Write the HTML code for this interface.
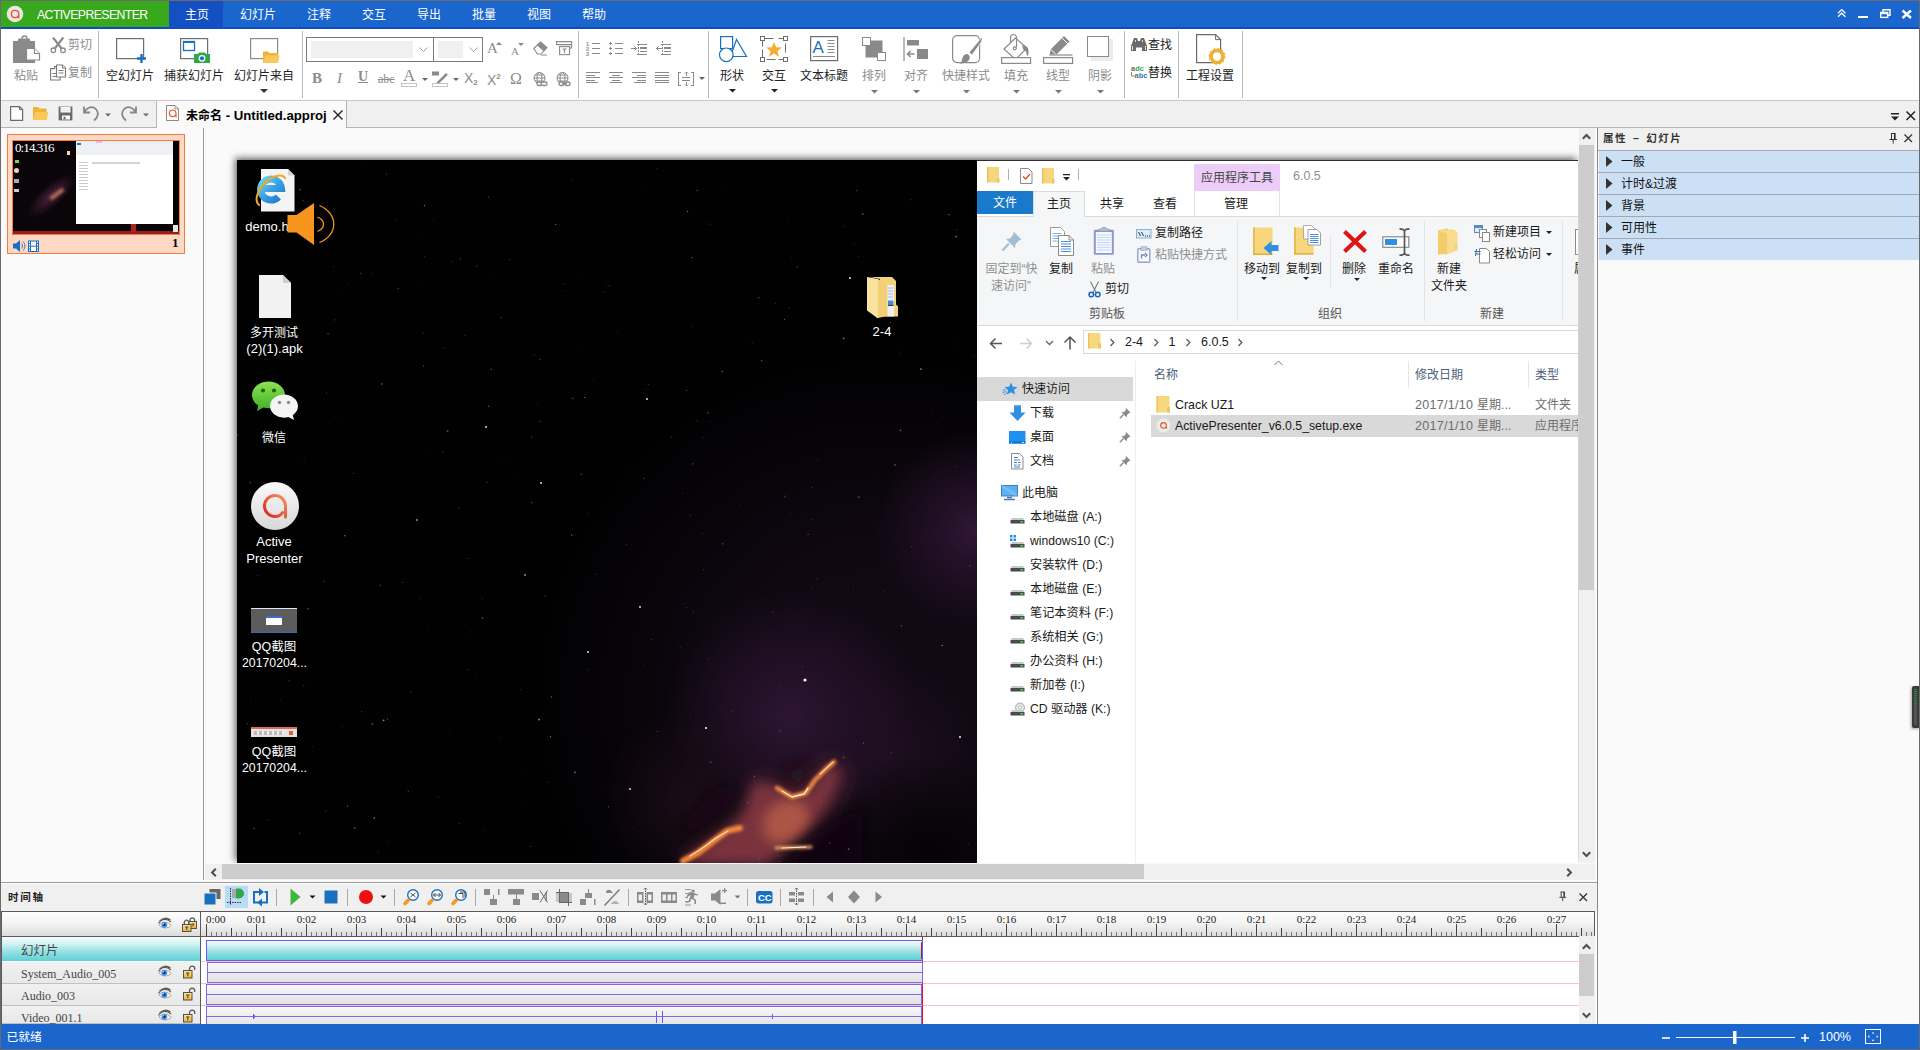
<!DOCTYPE html>
<html lang="zh-CN"><head><meta charset="utf-8"><title>ActivePresenter</title>
<style>
*{box-sizing:border-box;margin:0;padding:0}
html,body{width:1920px;height:1050px;overflow:hidden;background:#fafafa}
body{font-family:"Liberation Sans","Noto Sans CJK SC",sans-serif;font-size:12px;color:#222;position:relative}
.a{position:absolute}
.t{position:absolute;white-space:nowrap;line-height:16px}
svg{position:absolute;overflow:visible}
#win{position:absolute;left:0;top:0;width:1920px;height:1050px;border:1px solid #6a6a6a;pointer-events:none;z-index:99}
/* top bar */
#top{left:0;top:0;width:1920px;height:29px;background:#1a66cd}
#brand{left:1px;top:1px;width:168px;height:26px;background:#38a81c}
#tabhome{left:169px;top:1px;width:54px;height:27px;background:#1450c2}
.menu{color:#fff;font-size:12px;top:7px}
/* ribbon */
#ribbon{left:1px;top:29px;width:1918px;height:71px;background:#fff}
#ribline{left:1px;top:100px;width:1918px;height:1px;background:#c9c9c9}
.sep{position:absolute;top:31px;width:1px;height:67px;background:#b8b8b8}
.rl{position:absolute;white-space:nowrap;font-size:12px;line-height:16px;color:#222;transform:translateX(-50%)}
.rl.g{color:#8c8c8c}
.g{color:#8c8c8c}
/* doc bar */
#docbar{left:1px;top:101px;width:1918px;height:27px;background:#f0f0f0}
</style></head><body>
<div class="a" id="top"></div>
<div class="a" style="left:0;top:27px;width:1920px;height:2px;background:#0f4cc4"></div>
<div class="a" id="brand"></div>
<div class="a" id="tabhome"></div>
<svg style="left:6px;top:5px" width="18" height="18" viewBox="0 0 18 18"><circle cx="9" cy="9" r="8.300" fill="#e9e6e6"/><path d="M12.800 12.800V8.800a3.700 3.700 0 1 0-3.700 3.900c1.500 0 2.500-.7 3-1.600" fill="none" stroke="#e8552a" stroke-width="1.300" stroke-linecap="round"/></svg>
<div class="t" style="left:37px;top:7px;font-size:12.300px;color:#fff;letter-spacing:-0.600px">ACTIVEPRESENTER</div>
<div class="t menu" style="left:185px">主页</div>
<div class="t menu" style="left:240px">幻灯片</div>
<div class="t menu" style="left:307px">注释</div>
<div class="t menu" style="left:362px">交互</div>
<div class="t menu" style="left:417px">导出</div>
<div class="t menu" style="left:472px">批量</div>
<div class="t menu" style="left:527px">视图</div>
<div class="t menu" style="left:582px">帮助</div>
<svg style="left:1836px;top:8px" width="80" height="12" viewBox="1836 8 80 12" fill="none" stroke="#fff">
<path d="M1838 13.2l3.7-3.6 3.7 3.6M1838 16.8l3.7-3.6 3.7 3.6" stroke-width="1.3"/>
<path d="M1858 17h10" stroke-width="2"/>
<path d="M1883 12v-2.2h7v5.4h-2.2" stroke-width="1.4"/><rect x="1880.7" y="12.4" width="7" height="5" stroke-width="1.4"/><path d="M1880.7 13.4h7" stroke-width="1.6"/>
<path d="M1902.5 10.5l8.5 7.5M1911 10.5l-8.5 7.5" stroke-width="2.4"/>
</svg>
<div class="a" id="ribbon"></div>
<div class="a" id="ribline"></div>
<div class="sep" style="left:98px"></div><div class="sep" style="left:302px"></div><div class="sep" style="left:578px"></div><div class="sep" style="left:708px"></div><div class="sep" style="left:1124px"></div><div class="sep" style="left:1178px"></div><div class="sep" style="left:1242px"></div>
<!-- clipboard -->
<svg style="left:13px;top:35px" width="28" height="28" viewBox="0 0 28 28"><path d="M9 4.500V3.500a2.500 2.500 0 0 1 5 0v1" fill="none" stroke="#8a8a8a" stroke-width="1.300"/><path d="M0 6h22v22H0z" fill="#8a8a8a"/><path d="M5.500 3.500h11l1.500 3.500H4z" fill="#8a8a8a"/><path d="M13.500 13.500h8l5 5v6.500h-13z" fill="#fff" stroke="#8a8a8a" stroke-width="1.200"/><path d="M21.500 13.500v5h5" fill="#fff" stroke="#8a8a8a" stroke-width="1.200"/></svg>
<div class="rl g" style="left:26px;top:68px">粘贴</div>
<svg style="left:50px;top:36px" width="17" height="18" viewBox="0 0 17 18" fill="none" stroke="#8a8a8a" stroke-width="1.3"><circle cx="3.3" cy="14.3" r="2.3"/><circle cx="13" cy="14.3" r="2.3"/><path d="M4.800 12.500L13.300 1.500M11.500 12.500L3 1.500" stroke-width="2.100"/></svg>
<div class="t g" style="left:68px;top:37px">剪切</div>
<svg style="left:50px;top:64px" width="17" height="17" viewBox="0 0 17 17" fill="#fff" stroke="#7a7a7a" stroke-width="1.1"><path d="M0.600 4.600h4v-2h3.500v2h2V16H0.600z"/><path d="M6.500 1h6l3 3v9h-9z"/><path d="M12.500 1v3h3" /><path d="M8.500 6.500h5M8.500 9h5M2.500 9.500h4M2.500 12.500h4" stroke-width="1"/></svg>
<div class="t g" style="left:68px;top:65px">复制</div>
<!-- slides -->
<svg style="left:116px;top:38px" width="30" height="26" viewBox="0 0 30 26"><rect x="0.600" y="0.600" width="27" height="20" fill="#fff" stroke="#6e6e6e" stroke-width="1.200"/><path d="M25.500 16v9M21 20.500h9" stroke="#1a70c0" stroke-width="2.400"/></svg>
<div class="rl" style="left:130px;top:68px">空幻灯片</div>
<svg style="left:180px;top:38px" width="31" height="26" viewBox="0 0 31 26"><rect x="0.600" y="0.600" width="27" height="20" fill="#fff" stroke="#6e6e6e" stroke-width="1.200"/><rect x="3.500" y="3.500" width="11" height="9" fill="#fff" stroke="#1a70c0" stroke-width="1.300"/><path d="M3.500 4h11" stroke="#1a70c0" stroke-width="2"/><path d="M14 16h4l1-1.500h6l1 1.500h4v9H14z" fill="#2ea84a"/><circle cx="22" cy="20.300" r="3.400" fill="#fff"/><circle cx="22" cy="20.300" r="2.100" fill="#1a70c0"/></svg>
<div class="rl" style="left:194px;top:68px">捕获幻灯片</div>
<svg style="left:250px;top:38px" width="31" height="26" viewBox="0 0 31 26"><rect x="0.600" y="0.600" width="27" height="20" fill="#fff" stroke="#8a8a8a" stroke-width="1.200"/><path d="M13 13.500h5l1.500 1.500h8.500v10H13z" fill="#f2b33a"/><path d="M13 25l2.500-7.500h14L28 25z" fill="#f9c859"/></svg>
<div class="rl" style="left:264px;top:68px">幻灯片来自</div>
<svg style="left:260px;top:89px" width="8" height="4"><path d="M0 0h8l-4 4z" fill="#333"/></svg>
<!-- font -->
<div class="a" style="left:306px;top:37px;width:128px;height:25px;border:1px solid #7a7a7a;background:#fff"></div>
<div class="a" style="left:311px;top:41px;width:102px;height:17px;background:#f0f0f0"></div>
<div class="a" style="left:433px;top:37px;width:50px;height:25px;border:1px solid #7a7a7a;background:#fff"></div>
<div class="a" style="left:438px;top:41px;width:25px;height:17px;background:#f0f0f0"></div>
<svg style="left:419px;top:47px" width="60" height="6" fill="none" stroke="#a0a0a0" stroke-width="1"><path d="M0.500 0.500l4 4 4-4M50.500 0.500l4 4 4-4"/></svg>

<div class="t g" style="left:487px;top:40px;font:15px/16px 'Liberation Serif',serif">A</div><svg style="left:496px;top:42px" width="6" height="3"><path d="M0 3h6l-3-3z" fill="#8a8a8a"/></svg>
<div class="t g" style="left:511px;top:44px;font:11px/14px 'Liberation Serif',serif">A</div><svg style="left:518px;top:43px" width="6" height="3"><path d="M0 0h6l-3 3z" fill="#8a8a8a"/></svg>
<svg style="left:533px;top:41px" width="15" height="15" viewBox="0 0 15 15"><path d="M0.800 7.500L7.500 1l6.500 5.500-6 6.500H4.500z" fill="#fff" stroke="#8a8a8a" stroke-width="1.100"/><path d="M4 4.300L10.800 10.500 14 6.500 7.500 1z" fill="#8a8a8a"/><path d="M8 14h6" stroke="#8a8a8a" stroke-width="1"/></svg>
<svg style="left:556px;top:41px" width="17" height="15" viewBox="0 0 17 15" fill="none" stroke="#8a8a8a" stroke-width="1.100"><path d="M0.600 0.600h15v3h-15z"/><path d="M15.600 3v4h-2"/><rect x="3.600" y="5.600" width="10" height="8"/><path d="M6.500 8h4M8.500 8v4" stroke-width="1.200"/></svg>
<div class="t g" style="left:312px;top:70px;font:bold 15px/16px 'Liberation Serif',serif">B</div>
<div class="t g" style="left:337px;top:70px;font:italic 15px/16px 'Liberation Serif',serif">I</div>
<div class="t g" style="left:358px;top:69px;font:bold 14px/16px 'Liberation Serif',serif;text-decoration:underline">U</div>
<div class="t g" style="left:378px;top:71px;font:12px/16px 'Liberation Serif',serif;text-decoration:line-through">abc</div>
<div class="t g" style="left:403px;top:67px;font:17px/18px 'Liberation Serif',serif">A</div>
<div class="a" style="left:401px;top:83px;width:16px;height:4px;border:1px solid #c4c4c4;background:#fff"></div>
<svg style="left:422px;top:78px" width="6" height="3"><path d="M0 0h6l-3 3z" fill="#666"/></svg>
<svg style="left:432px;top:71px" width="17" height="13" viewBox="0 0 17 13"><rect x="0" y="0.500" width="7" height="4" fill="#8a8a8a"/><path d="M5 11l9-9 1.800 1.800-9 9H4z" fill="#8a8a8a"/></svg>
<div class="a" style="left:432px;top:83px;width:16px;height:4px;border:1px solid #c4c4c4;background:#fff"></div>
<svg style="left:453px;top:78px" width="6" height="3"><path d="M0 0h6l-3 3z" fill="#666"/></svg>
<div class="t g" style="left:464px;top:70px;font-size:14px">X<span style="font-size:8px;font-weight:bold;position:relative;top:2px">2</span></div>
<div class="t g" style="left:487px;top:72px;font-size:14px">X<span style="font-size:8px;font-weight:bold;position:relative;top:-6px">2</span></div>
<div class="t g" style="left:510px;top:71px;font:16px/16px 'Liberation Serif',serif">Ω</div>
<svg style="left:533px;top:72px" width="16" height="15" viewBox="0 0 16 15" fill="none" stroke="#8a8a8a" stroke-width="1"><circle cx="6.500" cy="6" r="5.500"/><ellipse cx="6.500" cy="6" rx="2.500" ry="5.500"/><path d="M1 6h11M2 3h9M2 9h9"/><rect x="4" y="10" width="5" height="3.500" rx="1.700" stroke-width="1.400" fill="#fff"/><rect x="8" y="10" width="6" height="3.500" rx="1.700" stroke-width="1.400" fill="#fff"/></svg>
<svg style="left:556px;top:72px" width="16" height="15" viewBox="0 0 16 15" fill="none" stroke="#8a8a8a" stroke-width="1"><circle cx="6.500" cy="6" r="5.500"/><ellipse cx="6.500" cy="6" rx="2.500" ry="5.500"/><path d="M1 6h11M2 3h9M2 9h9"/><rect x="3" y="10" width="5" height="3.500" rx="1.700" stroke-width="1.400" fill="#fff"/><rect x="9" y="10" width="5" height="3.500" rx="1.700" stroke-width="1.400" fill="#fff"/><path d="M6 11.800h5" stroke-width="1.400"/></svg>

<!-- paragraph -->
<svg style="left:586px;top:40px" width="90" height="17" viewBox="586 40 90 17" fill="none" stroke="#8a8a8a" stroke-width="1" shape-rendering="crispEdges">
<path d="M592 43.500h8M592 48.500h8M592 53.500h8"/>
<path d="M615 43.500h8M615 48.500h8M615 53.500h8"/><path d="M609 43.500h3M610.500 42v3M609 48.500h3M610.500 47v3M609 53.500h3M610.500 52v3"/>
<path d="M637 44.500h10M640 47.500h7M640 48.500h7M640 51.500h7M637 54.500h10"/><path d="M638.500 41v2M638.500 44v2M638.500 47v2M638.500 50v2M638.500 53v2"/><path d="M631 48.500h6"/>
<path d="M661 44.500h10M664 47.500h7M664 48.500h7M664 51.500h7M661 54.500h10"/><path d="M662.500 41v2M662.500 44v2M662.500 47v2M662.500 50v2M662.500 53v2"/><path d="M656 48.500h6"/>
</svg>
<svg style="left:586px;top:40px" width="90" height="17" viewBox="586 40 90 17" fill="none" stroke="#8a8a8a" stroke-width="1"><path d="M634.500 46.500l2 2-2 2M658.500 46.500l-2 2 2 2"/><text x="586" y="45.500" font-family="Liberation Sans,sans-serif" font-size="5.500" font-weight="bold" fill="#8a8a8a" stroke="none">1</text><text x="586" y="50.500" font-family="Liberation Sans,sans-serif" font-size="5.500" font-weight="bold" fill="#8a8a8a" stroke="none">2</text><text x="586" y="55.500" font-family="Liberation Sans,sans-serif" font-size="5.500" font-weight="bold" fill="#8a8a8a" stroke="none">3</text></svg>
<svg style="left:586px;top:71px" width="120" height="16" viewBox="586 71 120 16" fill="none" stroke="#8a8a8a" stroke-width="1" shape-rendering="crispEdges">
<path d="M586 72.500h14M586 75.500h9M586 77.500h14M586 80.500h9M586 82.500h12"/>
<path d="M609 72.500h14M612 75.500h8M609 77.500h14M612 80.500h8M610 82.500h12"/>
<path d="M632 72.500h14M637 75.500h9M632 77.500h14M637 80.500h9M634 82.500h12"/>
<path d="M655 72.500h14M655 75.500h14M655 77.500h14M655 80.500h14M655 82.500h14"/>
<path d="M681 72.500h-2.500v13h2.500M691 72.500h2.500v13h-2.500M682 77.500h8M682 80.500h8M686.500 72v4M686.500 82v4"/>
</svg>
<svg style="left:586px;top:71px" width="120" height="16" viewBox="586 71 120 16" fill="none" stroke="#8a8a8a" stroke-width="1"><path d="M685 73.500l1.500-1.500 1.500 1.500M685 84.500l1.500 1.500 1.500-1.500"/></svg>
<svg style="left:699px;top:77px" width="6" height="3"><path d="M0 0h6l-3 3z" fill="#666"/></svg>
<!-- big buttons -->
<svg style="left:719px;top:36px" width="29" height="27" viewBox="0 0 29 27" fill="#fff" stroke="#1a70c0" stroke-width="1.200"><rect x="1.600" y="0.600" width="12" height="12"/><path d="M17.500 3.500l10 17h-16z"/><circle cx="7.300" cy="18.800" r="6.800"/></svg>
<div class="rl" style="left:732px;top:68px">形状</div>
<svg style="left:729px;top:89px" width="7" height="4"><path d="M0 0h7l-3.500 3.500z" fill="#222"/></svg>
<svg style="left:760px;top:36px" width="29" height="27" viewBox="0 0 29 27"><rect x="2.500" y="2.500" width="23" height="21" fill="none" stroke="#6e6e6e" stroke-width="1" stroke-dasharray="9 5 9 3 9 5 9 3" stroke-dashoffset="-2"/><g fill="#fff" stroke="#6e6e6e" stroke-width="1"><rect x="0.500" y="0.500" width="4" height="4"/><rect x="23.500" y="0.500" width="4" height="4"/><rect x="0.500" y="21.500" width="4" height="4"/><rect x="23.500" y="21.500" width="4" height="4"/></g><path d="M14 6l2.200 5.200 5.600.4-4.300 3.600 1.400 5.500L14 17.600l-4.900 3.100 1.400-5.500-4.300-3.600 5.600-.4z" fill="#f4ae34"/></svg>
<div class="rl" style="left:774px;top:68px">交互</div>
<svg style="left:771px;top:89px" width="7" height="4"><path d="M0 0h7l-3.500 3.500z" fill="#222"/></svg>
<svg style="left:810px;top:36px" width="29" height="26" viewBox="0 0 29 26"><rect x="0.600" y="0.600" width="27" height="24" fill="#fff" stroke="#6e6e6e" stroke-width="1.200"/><text x="2.500" y="17" font-family="Liberation Sans,sans-serif" font-size="17" fill="#1a70c0">A</text><path d="M17.500 4.500h7M17.500 7.500h7M17.500 10.500h7M17.500 13.500h7M17.500 16.500h7M3 20.500h22" stroke="#8a8a8a" stroke-width="1"/></svg>
<div class="rl" style="left:824px;top:68px">文本标题</div>
<!-- disabled group -->
<svg style="left:862px;top:37px" width="25" height="25" viewBox="0 0 25 25"><rect x="3.500" y="3.500" width="17" height="17" fill="#8a8a8a"/><rect x="0.500" y="0.500" width="8" height="8" fill="#fff" stroke="#8a8a8a"/><rect x="15.500" y="15.500" width="8" height="8" fill="#fff" stroke="#8a8a8a"/></svg>
<div class="rl g" style="left:874px;top:68px">排列</div>
<svg style="left:871px;top:90px" width="7" height="4"><path d="M0 0h7l-3.500 3.500z" fill="#777"/></svg>
<svg style="left:903px;top:37px" width="26" height="25" viewBox="0 0 26 25"><path d="M1 0v24" stroke="#8a8a8a" stroke-width="1.200"/><rect x="4" y="3" width="12" height="5.500" fill="#8a8a8a"/><rect x="14" y="12" width="11" height="10" fill="#8a8a8a"/><path d="M4.500 17h7M7.500 14l-3 3 3 3" fill="none" stroke="#8a8a8a" stroke-width="1.600"/></svg>
<div class="rl g" style="left:916px;top:68px">对齐</div>
<svg style="left:913px;top:90px" width="7" height="4"><path d="M0 0h7l-3.500 3.500z" fill="#777"/></svg>
<svg style="left:952px;top:34px" width="31" height="30" viewBox="0 0 31 30"><rect x="0.600" y="1.600" width="27" height="27" rx="4.500" fill="#fff" stroke="#8a8a8a" stroke-width="1.200"/><path d="M17 18.500L29.500 3.500l1 0.500-1 4L20 21z" fill="#8a8a8a" stroke="#fff" stroke-width="0.800"/><path d="M15.500 20c-3 0-5 2-5.500 5.500-.3 2-1 3-2 4 4 0 8-1 9.500-4.500.8-2-.3-4.500-2-5z" fill="#8a8a8a"/></svg>
<div class="rl g" style="left:966px;top:68px">快捷样式</div>
<svg style="left:963px;top:90px" width="7" height="4"><path d="M0 0h7l-3.500 3.500z" fill="#777"/></svg>
<svg style="left:1001px;top:33px" width="31" height="31" viewBox="0 0 31 31" fill="none" stroke="#8a8a8a" stroke-width="1.200"><path d="M3 16L14.500 5 26 15 14.500 26.500z" fill="#fff"/><path d="M9.500 10V4.500a3 3 0 0 1 6 0V14"/><circle cx="13.800" cy="15.300" r="1.500"/><path d="M22 12.500c4 1 6 3 4.500 10-.5-4-2-6-4-6.500z" fill="#8a8a8a"/><rect x="0.600" y="24.600" width="29" height="5.800" fill="#fff"/></svg>
<div class="rl g" style="left:1016px;top:68px">填充</div>
<svg style="left:1013px;top:90px" width="7" height="4"><path d="M0 0h7l-3.500 3.500z" fill="#777"/></svg>
<svg style="left:1043px;top:33px" width="31" height="31" viewBox="0 0 31 31"><path d="M6.500 21.500L8 16 21 3l5.500 5.500-13 13z" fill="#8a8a8a"/><path d="M19 5l5.500 5.500" stroke="#fff" stroke-width="1"/><path d="M8 16.500l5 5" stroke="#fff" stroke-width="1"/><path d="M6.500 22h23" stroke="#8a8a8a" stroke-width="1.200"/><rect x="0.600" y="24.600" width="29" height="5.800" fill="#fff" stroke="#8a8a8a" stroke-width="1.200"/></svg>
<div class="rl g" style="left:1058px;top:68px">线型</div>
<svg style="left:1055px;top:90px" width="7" height="4"><path d="M0 0h7l-3.500 3.500z" fill="#777"/></svg>
<div class="a" style="left:1091px;top:39px;width:22px;height:22px;background:#ececec"></div>
<div class="a" style="left:1087px;top:36px;width:22px;height:21px;background:#fff;border:1px solid #8a8a8a"></div>
<div class="rl g" style="left:1100px;top:68px">阴影</div>
<svg style="left:1097px;top:90px" width="7" height="4"><path d="M0 0h7l-3.500 3.500z" fill="#777"/></svg>
<!-- find -->
<svg style="left:1131px;top:38px" width="16" height="13" viewBox="0 0 16 13" fill="#6a6a6a"><path d="M3 0h3l1 3h2l1-3h3l3 8v5h-5V9.500H5V13H0V8z"/><path d="M1.500 8v4M14.500 8v4M4.500 2v2M11.500 2v2" stroke="#fff" stroke-width="0.800"/></svg>
<div class="t" style="left:1148px;top:37px">查找</div>
<div class="t" style="left:1131px;top:65px;font:bold 7.400px/8px 'Liberation Sans',sans-serif;color:#6a6a6a">a<span style="color:#2ea84a">dc</span></div>
<div class="t" style="left:1134.500px;top:72px;font:bold 7.400px/8px 'Liberation Sans',sans-serif;color:#6a6a6a">a<span style="color:#1a70c0">bc</span></div>
<svg style="left:1131px;top:72px" width="4" height="6" fill="none" stroke="#6a6a6a" stroke-width="0.800"><path d="M0.500 0v4h3"/></svg>
<div class="t" style="left:1148px;top:65px">替换</div>
<svg style="left:1196px;top:34px" width="30" height="32" viewBox="0 0 30 32"><path d="M0.600 0.600h19l5 5v23h-24z" fill="#fff" stroke="#6a6a6a" stroke-width="1.200"/><path d="M19.600 0.600v5h5" fill="none" stroke="#6a6a6a" stroke-width="1"/><circle cx="21" cy="22.500" r="6" fill="#fff" stroke="#eeb030" stroke-width="3.600"/><circle cx="21" cy="22.500" r="7.600" fill="none" stroke="#eeb030" stroke-width="1.600" stroke-dasharray="2 1.980"/></svg>
<div class="rl" style="left:1210px;top:68px">工程设置</div>
<div class="a" id="docbar"></div>
<div class="a" style="left:1px;top:127px;width:1918px;height:1px;background:#b4b4b4"></div>
<div class="a" style="left:156px;top:101px;width:1px;height:27px;background:#b4b4b4"></div>
<div class="a" style="left:157px;top:101px;width:189px;height:27px;background:#fafafa"></div>
<div class="a" style="left:346px;top:101px;width:1px;height:27px;background:#b4b4b4"></div>
<svg style="left:9px;top:105px" width="142" height="17" viewBox="9 105 142 17" fill="none" stroke="#6a6a6a" stroke-width="1.200">
<path d="M10.600 106.600h9l3 3v10.800h-12z" fill="#fff"/><path d="M19.600 106.600v3h3" stroke-width="1"/>
<path d="M33 107h5l1.500 1.500h7v11.500H33z" fill="#f2b33a" stroke="none"/><path d="M33 120l2-8h13.500l-2 8z" fill="#f9c859" stroke="none"/>
<path d="M58.600 106.600h13.800v13.800H58.600z" fill="#6a6a6a" stroke="none"/><rect x="60.500" y="107" width="10" height="5.500" fill="#fff" stroke="none"/><rect x="62" y="115.500" width="8" height="4" fill="#fff" stroke="none"/><rect x="63.500" y="116.800" width="2" height="2.500" fill="#6a6a6a" stroke="none"/><path d="M61 108.800h9M61 110.800h9" stroke="#ccc" stroke-width="0.600"/>
<path d="M84 106.500v6h6M84.500 112c2-4 6.500-6 10-4s4.500 6.500 2 10l-2.500 2.500" stroke="#868686" stroke-width="1.800"/>
<path d="M105 113.500h6l-3 3z" fill="#6a6a6a" stroke="none"/>
<path d="M136 106.500v6h-6M135.500 112c-2-4-6.500-6-10-4s-4.500 6.500-2 10l2.500 2.500" stroke="#868686" stroke-width="1.800"/>
<path d="M143 113.500h6l-3 3z" fill="#6a6a6a" stroke="none"/>
</svg>
<svg style="left:166px;top:105px" width="13" height="16" viewBox="0 0 13 16"><path d="M0.500 0.500h8.500l3.500 3.500v11.500h-12z" fill="#fff" stroke="#8a8a8a" stroke-width="1"/><path d="M9 0.500v3.500h3.500" fill="none" stroke="#8a8a8a" stroke-width="0.800"/><path d="M10 12V8.200a3.300 3.300 0 1 0-3.300 3.400c1.200 0 2-.5 2.500-1.200" fill="none" stroke="#e8552a" stroke-width="1.200" stroke-linecap="round"/></svg>
<div class="t" style="left:186px;top:108px;font-weight:bold;color:#000;font-size:12px" id="doctitle">未命名<span style="font-size:13.200px"> - Untitled.approj</span></div>
<svg style="left:333px;top:110px" width="10" height="10" fill="none" stroke="#222" stroke-width="1.400"><path d="M0.500 0.500l9 9M9.500 0.500l-9 9"/></svg>
<svg style="left:1890px;top:113px" width="26" height="8" viewBox="0 0 26 8"><path d="M1 0h8v1.500H1zM1 3.500h8l-4 4z" fill="#222"/></svg>
<svg style="left:1906px;top:111px" width="9" height="9" fill="none" stroke="#222" stroke-width="1.500"><path d="M0.500 0.500l8.500 8.500M9 0.500l-8.500 8.500"/></svg>
<div class="a" style="left:1px;top:128px;width:202px;height:754px;background:#fafafa"></div>
<div class="a" style="left:203px;top:128px;width:1px;height:752px;background:#9a9a9a"></div>
<div class="a" style="left:7px;top:134px;width:178px;height:120px;background:#fdd9c5;border:1px solid #f47c3c"></div>
<div class="a" id="thumb" style="left:12px;top:140px;width:168px;height:95px;border:1px solid #ef7f45;background:#0a0508;overflow:hidden">
 <div class="a" style="left:8px;top:44px;width:60px;height:22px;background:radial-gradient(ellipse 30px 11px at 30px 11px,#4a2238 0%,#2a1224 50%,rgba(10,5,8,0) 100%);transform:rotate(-42deg)"></div>
 <div class="a" style="left:36px;top:51px;width:16px;height:4px;background:#b87058;transform:rotate(-38deg);filter:blur(1.500px)"></div>
 <div class="a" style="left:63px;top:0;width:97px;height:83px;background:#fff"></div>
 <div class="a" style="left:63px;top:0;width:97px;height:14px;background:#eef0f3"></div>
 <div class="a" style="left:64px;top:2px;width:4px;height:2px;background:#1979ca"></div>
 <div class="a" style="left:83px;top:0px;width:6px;height:2px;background:#e4b8f0"></div>
 <div class="a" style="left:79px;top:21px;width:48px;height:2px;background:#d4d4d4"></div>
 <div class="a" style="left:66px;top:19px;width:9px;height:30px;background:repeating-linear-gradient(#fff 0 2px,#c8ccd4 2px 3px)"></div>
 <div class="a" style="left:160px;top:0;width:6px;height:92px;background:#000"></div>
 <div class="a" style="left:0;top:90px;width:166px;height:3px;background:#9a1c1c"></div>
 <div class="a" style="left:118px;top:83px;width:5px;height:8px;background:#b02020;filter:blur(.6px)"></div>
 <div class="a" style="left:160px;top:84px;width:5px;height:7px;background:#dfe6ee;filter:blur(.6px)"></div>
 <div class="a" style="left:54px;top:10px;width:3px;height:4px;background:#f5d9a0;filter:blur(.5px)"></div>
 <div class="a" style="left:2px;top:19px;width:4px;height:3px;background:#7fd060;filter:blur(.5px)"></div>
 <div class="a" style="left:1px;top:27px;width:5px;height:5px;border-radius:3px;background:#f0d0c8;filter:blur(.5px)"></div>
 <div class="a" style="left:1px;top:38px;width:5px;height:4px;background:#aaa;filter:blur(.5px)"></div>
 <div class="a" style="left:1px;top:48px;width:5px;height:3px;background:#ccc;filter:blur(.5px)"></div>
 <div class="t" style="left:2px;top:-1px;font:13px/16px 'Liberation Serif',serif;color:#fff;letter-spacing:-0.900px">0:14.316</div>
</div>
<svg style="left:13px;top:240px" width="26" height="12" viewBox="0 0 26 12"><path d="M0 3.500h3l4-3.500v12l-4-3.500H0z" fill="#1a70c0"/><path d="M8.500 3.500c1.300 1.500 1.300 3.500 0 5M10 1.500c2.500 2.500 2.500 6.500 0 9" fill="none" stroke="#1a70c0" stroke-width="0.900"/><rect x="15.500" y="1" width="10" height="10.500" fill="#fff" stroke="#1a70c0" stroke-width="1"/><path d="M17.500 1v10.500M23.500 1v10.500M17.500 6.200h6M15.500 3.500h2M15.500 6.200h2M15.500 9h2M23.500 3.500h2M23.500 6.200h2M23.500 9h2" stroke="#1a70c0" stroke-width="1"/></svg>
<div class="t" style="left:172px;top:235px;font:bold 13px/16px 'Liberation Serif',serif;color:#000">1</div>
<!-- canvas area -->
<div class="a" style="left:204px;top:128px;width:1375px;height:735px;background:#fafafa"></div>
<div class="a" style="left:237px;top:160px;width:1341px;height:703px;box-shadow:-2px -2px 7px rgba(0,0,0,.6);background:#fff"></div>
<div class="a" id="slide" style="left:237px;top:160px;width:1341px;height:703px;overflow:hidden"><div class="a" id="sl" style="left:-237px;top:-160px;width:1920px;height:1050px">
<svg style="left:237px;top:160px" width="740" height="703" viewBox="237 160 740 703"><defs>
<filter id="b30" x="-50%" y="-50%" width="200%" height="200%"><feGaussianBlur stdDeviation="30"/></filter>
<filter id="b12" x="-50%" y="-50%" width="200%" height="200%"><feGaussianBlur stdDeviation="12"/></filter>
<filter id="b5" x="-50%" y="-50%" width="200%" height="200%"><feGaussianBlur stdDeviation="6"/></filter>
<filter id="b9" x="-50%" y="-50%" width="200%" height="200%"><feGaussianBlur stdDeviation="9"/></filter>
<filter id="b2" x="-50%" y="-50%" width="200%" height="200%"><feGaussianBlur stdDeviation="1.6"/></filter>
<filter id="b1" x="-50%" y="-50%" width="200%" height="200%"><feGaussianBlur stdDeviation="0.7"/></filter>
<clipPath id="wc"><rect x="237" y="160" width="740" height="703"/></clipPath>
</defs>
<rect x="237" y="160" width="740" height="703" fill="#010102"/>
<g clip-path="url(#wc)">
<radialGradient id="hz1" cx="880" cy="700" r="340" gradientUnits="userSpaceOnUse"><stop offset="0" stop-color="#150a17"/><stop offset="0.5" stop-color="#0e0710"/><stop offset="1" stop-color="#010102"/></radialGradient>
<radialGradient id="hz2" cx="790" cy="715" r="125" gradientUnits="userSpaceOnUse"><stop offset="0" stop-color="#2e1634" stop-opacity=".95"/><stop offset="0.5" stop-color="#2a1430" stop-opacity=".55"/><stop offset="1" stop-color="#2a1430" stop-opacity="0"/></radialGradient>
<radialGradient id="hz3" cx="975" cy="530" r="100" gradientUnits="userSpaceOnUse"><stop offset="0" stop-color="#321838" stop-opacity=".95"/><stop offset="0.55" stop-color="#2a1430" stop-opacity=".5"/><stop offset="1" stop-color="#2a1430" stop-opacity="0"/></radialGradient>
<radialGradient id="hz4" cx="930" cy="850" r="100" gradientUnits="userSpaceOnUse"><stop offset="0" stop-color="#040204" stop-opacity=".9"/><stop offset="1" stop-color="#040204" stop-opacity="0"/></radialGradient>
<radialGradient id="hz5" cx="690" cy="800" r="90" gradientUnits="userSpaceOnUse"><stop offset="0" stop-color="#1c0d18" stop-opacity=".9"/><stop offset="1" stop-color="#1c0d18" stop-opacity="0"/></radialGradient>
<radialGradient id="hz6" cx="900" cy="760" r="90" gradientUnits="userSpaceOnUse"><stop offset="0" stop-color="#1e0e20" stop-opacity=".8"/><stop offset="1" stop-color="#1e0e20" stop-opacity="0"/></radialGradient>
<rect x="237" y="160" width="740" height="703" fill="url(#hz1)"/>
<rect x="237" y="160" width="740" height="703" fill="url(#hz3)"/>
<rect x="237" y="160" width="740" height="703" fill="url(#hz6)"/>
<rect x="237" y="160" width="740" height="703" fill="url(#hz2)"/>
<rect x="237" y="160" width="740" height="703" fill="url(#hz5)"/>
<rect x="237" y="160" width="740" height="703" fill="url(#hz4)"/>
<g filter="url(#b12)">
<path d="M676 866 L727 828 L745 812 L757 776 L792 792 L836 758 L846 776 L828 810 L810 834 L786 848 L770 866z" fill="#5a2634"/>
</g>
<g filter="url(#b5)">
<path d="M681 863 L727 831 L743 817 L755 781 L777 788 L791 797 L806 793 L833 763 L840 776 L826 806 L808 830 L785 845 L767 863z" fill="#7e343e" opacity=".9"/>
<ellipse cx="786" cy="822" rx="24" ry="20" fill="#b45c48" opacity=".85" transform="rotate(-40 786 822)"/>
</g>
<g filter="url(#b9)">
<path d="M806 840 L862 806 L862 870 L785 870 L796 852z" fill="#120710" opacity=".8"/>
<path d="M780 776 L800 788 L812 773 L800 763z" fill="#1a0a16" opacity=".7"/>
<path d="M690 836 L728 808 L742 788 L718 788 L680 826z" fill="#140812" opacity=".6"/>
</g>
<g filter="url(#b2)" fill="none" stroke-linecap="round" stroke-linejoin="round">
<path d="M683 861 L698 853 L711 843 L727 831 L740 828" stroke="#f0873c" stroke-width="6"/>
<path d="M777 788 L785 793 L792 797 L806 793 L815 780 L826 769 L834 762" stroke="#ee8a40" stroke-width="4.500"/>
<path d="M776 848 L792 847.500 L811 847" stroke="#f0a060" stroke-width="3"/>
</g>
<g filter="url(#b1)" fill="none" stroke-linecap="round" stroke-linejoin="round">
<path d="M690 856 L704 847 L716 838 L728 831" stroke="#ffd9a0" stroke-width="1.400"/>
<path d="M782 791 L792 797 L804 794 L808 788" stroke="#ffe4b8" stroke-width="1.400"/>
<path d="M820 774 L833 762" stroke="#ffc888" stroke-width="1.400"/>
<path d="M782 848 L806 847" stroke="#fff0d8" stroke-width="1.200"/>
</g>
</g>
<g><circle cx="476.6" cy="266.0" r="0.9" fill="#fff" opacity="0.15"/><circle cx="844.7" cy="226.2" r="0.7" fill="#d8e0ff" opacity="0.15"/><circle cx="395.9" cy="220.4" r="0.6" fill="#fff" opacity="0.15"/><circle cx="304.1" cy="458.4" r="0.7" fill="#fff" opacity="0.15"/><circle cx="703.7" cy="569.8" r="0.45" fill="#d8e0ff" opacity="0.55"/><circle cx="530.5" cy="846.3" r="0.45" fill="#fff" opacity="0.55"/><circle cx="451.3" cy="261.4" r="0.45" fill="#e8d8f0" opacity="0.55"/><circle cx="651.6" cy="639.4" r="0.45" fill="#d8e0ff" opacity="0.55"/><circle cx="709.8" cy="421.8" r="0.7" fill="#d8e0ff" opacity="0.15"/><circle cx="281.1" cy="304.8" r="0.9" fill="#f0d0d8" opacity="0.55"/><circle cx="812.1" cy="487.3" r="0.6" fill="#e8d8f0" opacity="0.3"/><circle cx="420.8" cy="286.4" r="0.5" fill="#d8e0ff" opacity="0.15"/><circle cx="459.2" cy="508.1" r="0.55" fill="#e8d8f0" opacity="0.4"/><circle cx="687.6" cy="211.5" r="0.7" fill="#fff" opacity="0.4"/><circle cx="797.3" cy="266.8" r="0.6" fill="#fff" opacity="0.4"/><circle cx="948.9" cy="214.6" r="0.7" fill="#e8d8f0" opacity="0.55"/><circle cx="488.7" cy="406.2" r="0.6" fill="#f0d0d8" opacity="0.55"/><circle cx="287.9" cy="225.8" r="0.55" fill="#fff" opacity="0.4"/><circle cx="281.9" cy="653.1" r="0.9" fill="#f0d0d8" opacity="0.55"/><circle cx="447.6" cy="431.2" r="0.9" fill="#fff" opacity="0.3"/><circle cx="933.1" cy="409.9" r="0.7" fill="#f0d0d8" opacity="0.15"/><circle cx="280.6" cy="700.1" r="0.5" fill="#f0d0d8" opacity="0.2"/><circle cx="526.3" cy="772.6" r="0.45" fill="#f0d0d8" opacity="0.2"/><circle cx="534.2" cy="355.3" r="0.5" fill="#d8e0ff" opacity="0.4"/><circle cx="443.0" cy="452.0" r="0.55" fill="#fff" opacity="0.4"/><circle cx="348.7" cy="283.9" r="0.5" fill="#fff" opacity="0.2"/><circle cx="595.9" cy="574.2" r="0.55" fill="#fff" opacity="0.3"/><circle cx="344.8" cy="535.8" r="0.7" fill="#e8d8f0" opacity="0.55"/><circle cx="942.3" cy="645.4" r="0.7" fill="#fff" opacity="0.55"/><circle cx="574.9" cy="772.3" r="0.9" fill="#f0d0d8" opacity="0.55"/><circle cx="531.6" cy="437.1" r="0.6" fill="#fff" opacity="0.4"/><circle cx="378.1" cy="852.2" r="0.6" fill="#fff" opacity="0.2"/><circle cx="488.6" cy="197.0" r="0.45" fill="#fff" opacity="0.55"/><circle cx="634.1" cy="827.1" r="0.7" fill="#fff" opacity="0.15"/><circle cx="884.0" cy="591.7" r="0.5" fill="#e8d8f0" opacity="0.3"/><circle cx="682.7" cy="493.3" r="0.45" fill="#f0d0d8" opacity="0.4"/><circle cx="592.5" cy="379.2" r="0.5" fill="#e8d8f0" opacity="0.15"/><circle cx="784.9" cy="496.5" r="0.9" fill="#d8e0ff" opacity="0.2"/><circle cx="254.1" cy="828.5" r="0.7" fill="#fff" opacity="0.3"/><circle cx="747.7" cy="802.6" r="0.7" fill="#fff" opacity="0.3"/><circle cx="752.2" cy="343.6" r="0.55" fill="#e8d8f0" opacity="0.2"/><circle cx="808.2" cy="534.4" r="0.7" fill="#fff" opacity="0.3"/><circle cx="690.8" cy="714.2" r="0.5" fill="#f0d0d8" opacity="0.2"/><circle cx="784.5" cy="319.4" r="0.7" fill="#e8d8f0" opacity="0.4"/><circle cx="777.9" cy="855.7" r="0.55" fill="#e8d8f0" opacity="0.4"/><circle cx="380.3" cy="585.4" r="0.55" fill="#e8d8f0" opacity="0.4"/><circle cx="943.7" cy="416.3" r="0.5" fill="#fff" opacity="0.15"/><circle cx="584.9" cy="397.4" r="0.6" fill="#d8e0ff" opacity="0.55"/><circle cx="858.9" cy="497.1" r="0.9" fill="#fff" opacity="0.3"/><circle cx="854.6" cy="244.3" r="0.6" fill="#f0d0d8" opacity="0.2"/><circle cx="894.9" cy="465.0" r="0.9" fill="#fff" opacity="0.3"/><circle cx="829.6" cy="843.1" r="0.6" fill="#f0d0d8" opacity="0.4"/><circle cx="787.1" cy="219.7" r="0.5" fill="#fff" opacity="0.2"/><circle cx="257.4" cy="575.3" r="0.6" fill="#d8e0ff" opacity="0.2"/><circle cx="848.6" cy="849.2" r="0.9" fill="#fff" opacity="0.3"/><circle cx="643.0" cy="252.1" r="0.45" fill="#d8e0ff" opacity="0.15"/><circle cx="791.6" cy="257.9" r="0.5" fill="#fff" opacity="0.2"/><circle cx="423.4" cy="366.0" r="0.5" fill="#e8d8f0" opacity="0.55"/><circle cx="428.9" cy="454.6" r="0.5" fill="#e8d8f0" opacity="0.15"/><circle cx="901.3" cy="625.7" r="0.7" fill="#d8e0ff" opacity="0.4"/><circle cx="333.8" cy="266.7" r="0.7" fill="#f0d0d8" opacity="0.15"/><circle cx="811.6" cy="587.8" r="0.5" fill="#fff" opacity="0.2"/><circle cx="587.4" cy="669.8" r="0.7" fill="#e8d8f0" opacity="0.15"/><circle cx="741.9" cy="533.1" r="0.6" fill="#d8e0ff" opacity="0.15"/><circle cx="279.0" cy="294.5" r="0.45" fill="#d8e0ff" opacity="0.15"/><circle cx="571.6" cy="179.6" r="0.45" fill="#e8d8f0" opacity="0.4"/><circle cx="690.3" cy="515.4" r="0.7" fill="#e8d8f0" opacity="0.2"/><circle cx="571.7" cy="534.9" r="0.6" fill="#fff" opacity="0.55"/><circle cx="754.4" cy="776.2" r="0.55" fill="#fff" opacity="0.55"/><circle cx="858.6" cy="256.4" r="0.45" fill="#f0d0d8" opacity="0.4"/><circle cx="470.8" cy="631.8" r="0.6" fill="#fff" opacity="0.15"/><circle cx="732.4" cy="711.1" r="0.5" fill="#fff" opacity="0.3"/><circle cx="424.3" cy="256.5" r="0.6" fill="#fff" opacity="0.2"/><circle cx="531.7" cy="502.5" r="0.9" fill="#fff" opacity="0.2"/><circle cx="759.7" cy="858.8" r="0.6" fill="#f0d0d8" opacity="0.3"/><circle cx="381.9" cy="383.9" r="0.9" fill="#fff" opacity="0.3"/><circle cx="487.1" cy="482.4" r="0.9" fill="#f0d0d8" opacity="0.15"/><circle cx="482.3" cy="598.6" r="0.7" fill="#fff" opacity="0.15"/><circle cx="966.0" cy="714.2" r="0.45" fill="#e8d8f0" opacity="0.15"/><circle cx="438.2" cy="796.8" r="0.5" fill="#fff" opacity="0.3"/><circle cx="843.6" cy="757.3" r="0.9" fill="#f0d0d8" opacity="0.3"/><circle cx="347.5" cy="806.2" r="0.7" fill="#e8d8f0" opacity="0.4"/><circle cx="303.2" cy="200.4" r="0.9" fill="#f0d0d8" opacity="0.2"/><circle cx="899.5" cy="349.1" r="0.45" fill="#e8d8f0" opacity="0.15"/><circle cx="299.0" cy="761.9" r="0.45" fill="#fff" opacity="0.3"/><circle cx="572.8" cy="398.4" r="0.7" fill="#e8d8f0" opacity="0.4"/><circle cx="697.1" cy="190.4" r="0.9" fill="#fff" opacity="0.2"/><circle cx="954.2" cy="344.1" r="0.5" fill="#e8d8f0" opacity="0.2"/><circle cx="702.2" cy="533.4" r="0.5" fill="#f0d0d8" opacity="0.3"/><circle cx="607.1" cy="285.1" r="0.55" fill="#e8d8f0" opacity="0.15"/><circle cx="264.3" cy="173.0" r="0.7" fill="#fff" opacity="0.55"/><circle cx="617.5" cy="332.7" r="0.6" fill="#f0d0d8" opacity="0.15"/><circle cx="722.8" cy="543.8" r="0.6" fill="#e8d8f0" opacity="0.55"/><circle cx="745.9" cy="850.7" r="0.55" fill="#fff" opacity="0.2"/><circle cx="536.5" cy="404.3" r="0.45" fill="#fff" opacity="0.2"/><circle cx="289.3" cy="680.8" r="0.55" fill="#fff" opacity="0.4"/><circle cx="278.0" cy="627.7" r="0.6" fill="#e8d8f0" opacity="0.55"/><circle cx="680.1" cy="647.0" r="0.45" fill="#fff" opacity="0.4"/><circle cx="353.6" cy="473.4" r="0.55" fill="#e8d8f0" opacity="0.3"/><circle cx="956.7" cy="544.6" r="0.5" fill="#e8d8f0" opacity="0.15"/><circle cx="398.2" cy="288.6" r="0.55" fill="#fff" opacity="0.4"/><circle cx="588.2" cy="513.4" r="0.5" fill="#d8e0ff" opacity="0.2"/><circle cx="811.4" cy="223.9" r="0.45" fill="#f0d0d8" opacity="0.2"/><circle cx="671.2" cy="437.0" r="0.55" fill="#fff" opacity="0.3"/><circle cx="299.5" cy="833.2" r="0.5" fill="#f0d0d8" opacity="0.55"/><circle cx="802.6" cy="666.6" r="0.6" fill="#e8d8f0" opacity="0.2"/><circle cx="772.9" cy="612.2" r="0.45" fill="#f0d0d8" opacity="0.55"/><circle cx="780.1" cy="731.0" r="0.5" fill="#d8e0ff" opacity="0.55"/><circle cx="657.7" cy="731.5" r="0.45" fill="#fff" opacity="0.55"/><circle cx="300.0" cy="189.4" r="0.9" fill="#fff" opacity="0.3"/><circle cx="515.7" cy="477.3" r="0.45" fill="#d8e0ff" opacity="0.15"/><circle cx="740.7" cy="504.0" r="0.45" fill="#fff" opacity="0.4"/><circle cx="790.7" cy="513.6" r="0.7" fill="#d8e0ff" opacity="0.15"/><circle cx="285.9" cy="678.0" r="0.55" fill="#e8d8f0" opacity="0.15"/><circle cx="410.7" cy="691.8" r="0.5" fill="#f0d0d8" opacity="0.4"/><circle cx="862.7" cy="213.9" r="0.9" fill="#fff" opacity="0.3"/><circle cx="693.6" cy="611.9" r="0.45" fill="#fff" opacity="0.55"/><circle cx="482.5" cy="618.0" r="0.9" fill="#d8e0ff" opacity="0.3"/><circle cx="657.1" cy="168.8" r="0.45" fill="#e8d8f0" opacity="0.4"/><circle cx="956.7" cy="230.0" r="0.5" fill="#e8d8f0" opacity="0.4"/><circle cx="761.6" cy="360.7" r="0.6" fill="#fff" opacity="0.4"/><circle cx="972.0" cy="546.0" r="0.55" fill="#f0d0d8" opacity="0.15"/><circle cx="250.0" cy="482.7" r="0.7" fill="#e8d8f0" opacity="0.4"/><circle cx="523.3" cy="804.3" r="0.5" fill="#d8e0ff" opacity="0.15"/><circle cx="303.8" cy="685.5" r="0.55" fill="#fff" opacity="0.3"/><circle cx="683.5" cy="604.1" r="0.55" fill="#e8d8f0" opacity="0.15"/><circle cx="408.2" cy="791.1" r="0.6" fill="#fff" opacity="0.4"/><circle cx="354.7" cy="827.8" r="0.9" fill="#f0d0d8" opacity="0.4"/><circle cx="460.4" cy="258.9" r="0.55" fill="#e8d8f0" opacity="0.4"/><circle cx="326.5" cy="392.9" r="0.55" fill="#f0d0d8" opacity="0.3"/><circle cx="325.8" cy="811.3" r="0.9" fill="#e8d8f0" opacity="0.15"/><circle cx="424.4" cy="205.7" r="0.6" fill="#fff" opacity="0.55"/><circle cx="503.9" cy="460.9" r="0.55" fill="#e8d8f0" opacity="0.15"/><circle cx="312.3" cy="746.8" r="0.55" fill="#fff" opacity="0.2"/><circle cx="955.6" cy="466.7" r="0.55" fill="#e8d8f0" opacity="0.2"/><circle cx="818.0" cy="460.7" r="0.45" fill="#d8e0ff" opacity="0.4"/><circle cx="643.4" cy="665.9" r="0.45" fill="#f0d0d8" opacity="0.4"/><circle cx="692.0" cy="257.4" r="0.55" fill="#fff" opacity="0.4"/><circle cx="911.8" cy="546.7" r="0.5" fill="#f0d0d8" opacity="0.4"/><circle cx="491.3" cy="369.3" r="0.9" fill="#f0d0d8" opacity="0.3"/><circle cx="722.4" cy="371.5" r="0.7" fill="#fff" opacity="0.4"/><circle cx="360.8" cy="273.6" r="0.5" fill="#f0d0d8" opacity="0.55"/><circle cx="644.3" cy="478.4" r="0.55" fill="#f0d0d8" opacity="0.4"/><circle cx="340.3" cy="295.3" r="0.45" fill="#e8d8f0" opacity="0.2"/><circle cx="648.3" cy="384.5" r="0.55" fill="#d8e0ff" opacity="0.3"/><circle cx="386.6" cy="174.1" r="0.6" fill="#f0d0d8" opacity="0.4"/><circle cx="788.9" cy="307.6" r="0.55" fill="#fff" opacity="0.3"/><circle cx="605.6" cy="563.7" r="0.55" fill="#d8e0ff" opacity="0.2"/><circle cx="628.6" cy="715.6" r="0.5" fill="#e8d8f0" opacity="0.15"/><circle cx="900.6" cy="430.3" r="0.9" fill="#f0d0d8" opacity="0.4"/><circle cx="942.9" cy="756.6" r="0.45" fill="#fff" opacity="0.2"/><circle cx="551.6" cy="696.9" r="0.6" fill="#f0d0d8" opacity="0.55"/><circle cx="237.1" cy="435.2" r="0.7" fill="#f0d0d8" opacity="0.4"/><circle cx="420.9" cy="236.7" r="0.5" fill="#d8e0ff" opacity="0.2"/><circle cx="956.2" cy="236.5" r="0.9" fill="#fff" opacity="0.4"/><circle cx="645.1" cy="187.8" r="0.5" fill="#d8e0ff" opacity="0.2"/><circle cx="917.7" cy="613.8" r="0.55" fill="#e8d8f0" opacity="0.2"/><circle cx="627.9" cy="467.5" r="0.45" fill="#fff" opacity="0.15"/><circle cx="459.3" cy="823.3" r="0.5" fill="#e8d8f0" opacity="0.4"/><circle cx="402.5" cy="582.5" r="0.45" fill="#e8d8f0" opacity="0.55"/><circle cx="974.3" cy="355.9" r="0.55" fill="#f0d0d8" opacity="0.2"/><circle cx="626.4" cy="544.5" r="0.45" fill="#e8d8f0" opacity="0.4"/><circle cx="277.9" cy="296.5" r="0.9" fill="#fff" opacity="0.4"/><circle cx="427.4" cy="629.2" r="0.55" fill="#f0d0d8" opacity="0.2"/><circle cx="262.2" cy="397.7" r="0.6" fill="#f0d0d8" opacity="0.3"/><circle cx="383.6" cy="720.3" r="0.9" fill="#fff" opacity="0.55"/><circle cx="388.9" cy="841.8" r="0.55" fill="#fff" opacity="0.2"/><circle cx="581.2" cy="346.3" r="0.55" fill="#d8e0ff" opacity="0.15"/><circle cx="603.9" cy="291.7" r="0.5" fill="#f0d0d8" opacity="0.4"/><circle cx="910.7" cy="199.7" r="0.7" fill="#f0d0d8" opacity="0.2"/><circle cx="277.2" cy="176.6" r="0.7" fill="#f0d0d8" opacity="0.2"/><circle cx="275.4" cy="202.3" r="0.6" fill="#e8d8f0" opacity="0.4"/><circle cx="779.2" cy="861.3" r="0.5" fill="#fff" opacity="0.3"/><circle cx="374.3" cy="817.9" r="0.9" fill="#fff" opacity="0.4"/><circle cx="467.8" cy="669.9" r="0.55" fill="#f0d0d8" opacity="0.3"/><circle cx="362.3" cy="162.0" r="0.55" fill="#e8d8f0" opacity="0.15"/><circle cx="547.9" cy="782.3" r="0.7" fill="#f0d0d8" opacity="0.2"/><circle cx="500.9" cy="737.6" r="0.6" fill="#fff" opacity="0.15"/><circle cx="758.9" cy="297.6" r="0.7" fill="#fff" opacity="0.4"/><circle cx="476.2" cy="678.3" r="0.6" fill="#f0d0d8" opacity="0.15"/><circle cx="420.5" cy="599.7" r="0.6" fill="#f0d0d8" opacity="0.15"/><circle cx="262.8" cy="204.0" r="0.45" fill="#fff" opacity="0.3"/><circle cx="790.0" cy="791.7" r="0.55" fill="#e8d8f0" opacity="0.3"/><circle cx="484.9" cy="830.5" r="0.45" fill="#e8d8f0" opacity="0.3"/><circle cx="920.9" cy="369.1" r="0.9" fill="#fff" opacity="0.55"/><circle cx="254.9" cy="324.4" r="0.6" fill="#f0d0d8" opacity="0.4"/><circle cx="821.5" cy="802.2" r="0.6" fill="#f0d0d8" opacity="0.2"/><circle cx="372.4" cy="724.2" r="0.9" fill="#fff" opacity="0.3"/><circle cx="686.4" cy="390.4" r="0.55" fill="#e8d8f0" opacity="0.4"/><circle cx="817.0" cy="578.8" r="0.7" fill="#f0d0d8" opacity="0.2"/><circle cx="794.1" cy="333.9" r="0.45" fill="#f0d0d8" opacity="0.15"/><circle cx="645.9" cy="389.0" r="0.6" fill="#fff" opacity="0.15"/><circle cx="433.0" cy="219.1" r="0.45" fill="#f0d0d8" opacity="0.4"/><circle cx="968.4" cy="843.4" r="0.5" fill="#fff" opacity="0.2"/><circle cx="545.5" cy="596.1" r="0.9" fill="#d8e0ff" opacity="0.2"/><circle cx="863.8" cy="627.1" r="0.45" fill="#e8d8f0" opacity="0.3"/><circle cx="443.8" cy="348.2" r="0.55" fill="#fff" opacity="0.3"/><circle cx="562.2" cy="290.6" r="0.5" fill="#e8d8f0" opacity="0.2"/><circle cx="891.3" cy="566.5" r="0.55" fill="#f0d0d8" opacity="0.15"/><circle cx="423.2" cy="332.9" r="0.7" fill="#fff" opacity="0.2"/><circle cx="720.5" cy="856.6" r="0.45" fill="#f0d0d8" opacity="0.15"/><circle cx="890.3" cy="322.5" r="0.6" fill="#fff" opacity="0.3"/><circle cx="885.9" cy="323.7" r="0.45" fill="#d8e0ff" opacity="0.2"/><circle cx="957.0" cy="570.0" r="0.45" fill="#d8e0ff" opacity="0.3"/><circle cx="877.9" cy="475.7" r="0.55" fill="#fff" opacity="0.15"/><circle cx="708.7" cy="658.9" r="0.55" fill="#fff" opacity="0.2"/><circle cx="509.8" cy="259.4" r="0.5" fill="#fff" opacity="0.3"/><circle cx="680.6" cy="618.1" r="0.5" fill="#e8d8f0" opacity="0.15"/><circle cx="539.7" cy="421.4" r="0.7" fill="#fff" opacity="0.3"/><circle cx="387.5" cy="719.1" r="0.7" fill="#fff" opacity="0.4"/><circle cx="539.0" cy="719.5" r="0.9" fill="#fff" opacity="0.55"/><circle cx="710.0" cy="224.1" r="0.5" fill="#e8d8f0" opacity="0.4"/><circle cx="540.2" cy="359.2" r="0.55" fill="#fff" opacity="0.4"/><circle cx="468.1" cy="558.3" r="0.55" fill="#f0d0d8" opacity="0.4"/><circle cx="250.5" cy="699.0" r="0.55" fill="#f0d0d8" opacity="0.2"/><circle cx="775.7" cy="303.2" r="0.45" fill="#fff" opacity="0.4"/><circle cx="550.6" cy="736.7" r="0.6" fill="#e8d8f0" opacity="0.55"/><circle cx="578.1" cy="274.3" r="0.45" fill="#d8e0ff" opacity="0.15"/><circle cx="342.4" cy="726.9" r="0.6" fill="#d8e0ff" opacity="0.15"/><circle cx="697.4" cy="420.7" r="0.7" fill="#fff" opacity="0.2"/><circle cx="494.5" cy="273.8" r="0.5" fill="#fff" opacity="0.15"/><circle cx="521.0" cy="689.7" r="0.5" fill="#fff" opacity="0.3"/><circle cx="856.6" cy="190.6" r="0.6" fill="#fff" opacity="0.3"/><circle cx="686.7" cy="607.4" r="0.45" fill="#fff" opacity="0.55"/><circle cx="710.8" cy="762.2" r="0.7" fill="#d8e0ff" opacity="0.4"/><circle cx="863.3" cy="742.9" r="0.5" fill="#fff" opacity="0.55"/><circle cx="267.9" cy="819.8" r="0.5" fill="#e8d8f0" opacity="0.4"/><circle cx="328.1" cy="333.7" r="0.9" fill="#fff" opacity="0.2"/><circle cx="891.1" cy="752.3" r="0.9" fill="#e8d8f0" opacity="0.15"/><circle cx="324.1" cy="581.5" r="0.7" fill="#f0d0d8" opacity="0.3"/><circle cx="465.1" cy="335.2" r="0.6" fill="#f0d0d8" opacity="0.3"/><circle cx="609.6" cy="285.7" r="0.45" fill="#f0d0d8" opacity="0.55"/><circle cx="581.3" cy="474.1" r="0.7" fill="#fff" opacity="0.4"/><circle cx="836.8" cy="441.4" r="0.45" fill="#e8d8f0" opacity="0.2"/><circle cx="555.6" cy="224.5" r="0.6" fill="#d8e0ff" opacity="0.55"/><circle cx="723.3" cy="188.6" r="0.5" fill="#e8d8f0" opacity="0.15"/><circle cx="812.5" cy="519.6" r="0.45" fill="#f0d0d8" opacity="0.55"/><circle cx="720.0" cy="711.3" r="0.45" fill="#d8e0ff" opacity="0.15"/><circle cx="778.7" cy="732.9" r="0.5" fill="#f0d0d8" opacity="0.2"/><circle cx="450.0" cy="730.1" r="0.5" fill="#fff" opacity="0.2"/><circle cx="853.4" cy="589.1" r="0.55" fill="#e8d8f0" opacity="0.2"/><circle cx="900.4" cy="353.3" r="0.6" fill="#e8d8f0" opacity="0.2"/><circle cx="608.6" cy="806.7" r="0.5" fill="#e8d8f0" opacity="0.55"/><circle cx="692.7" cy="326.9" r="0.55" fill="#fff" opacity="0.15"/><circle cx="371.8" cy="273.3" r="0.55" fill="#f0d0d8" opacity="0.3"/><circle cx="361.9" cy="711.8" r="0.45" fill="#fff" opacity="0.55"/><circle cx="707.9" cy="412.9" r="0.6" fill="#d8e0ff" opacity="0.55"/><circle cx="666.2" cy="780.4" r="0.45" fill="#d8e0ff" opacity="0.3"/><circle cx="703.0" cy="437.2" r="0.55" fill="#f0d0d8" opacity="0.3"/><circle cx="970.0" cy="565.9" r="0.55" fill="#fff" opacity="0.3"/><circle cx="564.3" cy="284.3" r="0.9" fill="#e8d8f0" opacity="0.15"/><circle cx="843.7" cy="338.3" r="0.9" fill="#e8d8f0" opacity="0.55"/><circle cx="779.4" cy="685.2" r="0.5" fill="#e8d8f0" opacity="0.2"/><circle cx="692.9" cy="463.9" r="0.7" fill="#fff" opacity="0.3"/><circle cx="334.7" cy="319.8" r="0.9" fill="#fff" opacity="0.15"/><circle cx="277.3" cy="558.7" r="0.55" fill="#d8e0ff" opacity="0.15"/><circle cx="501.3" cy="317.7" r="0.7" fill="#d8e0ff" opacity="0.3"/><circle cx="336.0" cy="417.5" r="0.6" fill="#fff" opacity="0.2"/><circle cx="247.4" cy="723.5" r="0.9" fill="#f0d0d8" opacity="0.2"/><circle cx="307.9" cy="608.7" r="0.9" fill="#f0d0d8" opacity="0.3"/><circle cx="805" cy="680" r="1.6" fill="#fff" opacity="0.95"/><circle cx="850" cy="278" r="0.9" fill="#fff" opacity="0.95"/><circle cx="960" cy="737" r="1.0" fill="#fff" opacity="0.95"/><circle cx="647" cy="399" r="0.9" fill="#fff" opacity="0.95"/><circle cx="541" cy="483" r="0.9" fill="#fff" opacity="0.95"/><circle cx="417" cy="520" r="0.8" fill="#fff" opacity="0.95"/><circle cx="706" cy="728" r="1.1" fill="#fff" opacity="0.95"/><circle cx="630" cy="789" r="0.9" fill="#fff" opacity="0.95"/><circle cx="486" cy="427" r="0.9" fill="#fff" opacity="0.95"/><circle cx="588" cy="652" r="0.9" fill="#fff" opacity="0.95"/><circle cx="525" cy="575" r="0.8" fill="#fff" opacity="0.95"/><circle cx="640" cy="607" r="0.9" fill="#fff" opacity="0.95"/></g></svg>
<style>
.dl{position:absolute;white-space:nowrap;color:#fff;font-size:12.500px;line-height:17px;transform:translateX(-50%);text-shadow:0 1px 2px rgba(0,0,0,.9)}
</style>
<!-- IE doc -->
<svg style="left:254px;top:168px" width="42" height="45" viewBox="254 168 42 45">
<defs><linearGradient id="ieg" gradientUnits="userSpaceOnUse" x1="258" y1="176" x2="284" y2="204"><stop offset="0" stop-color="#7fe0f0"/><stop offset="0.500" stop-color="#3aa0e0"/><stop offset="1" stop-color="#1f6fd0"/></linearGradient></defs>
<path d="M261 169h27l6.500 6.500v36H261z" fill="#f4f4f4"/><path d="M288 169v6.500h6.500z" fill="#d4d4d4"/>
<path d="M263 188.500H281.500A10.500 10.500 0 1 0 278.500 197" fill="none" stroke="url(#ieg)" stroke-width="7"/>
<path d="M259 205c-6-5 0-19 11-26 6-4 13-5 15-1" fill="none" stroke="#f5a623" stroke-width="2" stroke-linecap="round"/>
</svg>
<div class="dl" style="left:267px;top:218px;font-size:13px">demo.h</div>
<svg style="left:287px;top:202px" width="50" height="44" viewBox="287 202 50 44"><path d="M287.500 215h9L314 203v42l-17.500-12.500h-9z" fill="#f7941d"/><path d="M317.500 217c8 3.500 8 11 0 14.500M319.500 205.500c19 8 19 29.500 0 37" fill="none" stroke="#f7941d" stroke-width="1.300"/></svg>
<!-- blank file -->
<svg style="left:259px;top:275px" width="32" height="43" viewBox="0 0 32 43"><path d="M0 0h24l8 8v35H0z" fill="#f2f2f2"/><path d="M24 0v8h8z" fill="#cfcfcf"/></svg>
<div class="dl" style="left:274px;top:325px;font-size:12px">多开测试</div>
<div class="dl" style="left:274.500px;top:340px;font-size:13px">(2)(1).apk</div>
<!-- wechat -->
<svg style="left:251px;top:380px" width="48" height="41" viewBox="0 0 48 41">
<defs><linearGradient id="wcg" x1="0" y1="0" x2="0" y2="1"><stop offset="0" stop-color="#8ee34f"/><stop offset="1" stop-color="#3fae27"/></linearGradient></defs>
<path d="M17.500 1.500c-9 0-16.500 6-16.500 13.500 0 4.300 2.400 8 6.200 10.500L6 31l6.500-3.500c1.600.5 3.300.7 5 .7 9 0 16.500-6 16.500-13.200S26.500 1.500 17.500 1.500z" fill="url(#wcg)"/>
<circle cx="12" cy="10.500" r="2.100" fill="#1e6a14"/><circle cx="23" cy="10.500" r="2.100" fill="#1e6a14"/>
<path d="M33 14.500c-7.700 0-14 5.200-14 11.600s6.300 11.600 14 11.600c1.500 0 3-.2 4.300-.6L43 40l-1.200-4.800c3.200-2.100 5.200-5.400 5.200-9.100 0-6.400-6.300-11.600-14-11.600z" fill="#f4f4f4"/>
<circle cx="28.500" cy="22.500" r="1.700" fill="#8a8a8a"/><circle cx="37.500" cy="22.500" r="1.700" fill="#8a8a8a"/>
</svg>
<div class="dl" style="left:274px;top:430px;font-size:12px">微信</div>
<!-- AP -->
<svg style="left:250px;top:481px" width="50" height="50" viewBox="0 0 50 50"><defs><linearGradient id="apg" x1="0" y1="0" x2="0" y2="1"><stop offset="0" stop-color="#fafafa"/><stop offset="1" stop-color="#d8d8d8"/></linearGradient><linearGradient id="apr" x1="1" y1="0" x2="0" y2="1"><stop offset="0" stop-color="#f09a60"/><stop offset="1" stop-color="#e21b1b"/></linearGradient></defs><circle cx="25" cy="25" r="24" fill="url(#apg)"/><path d="M35.500 36V24.500a10.500 10.500 0 1 0-10.500 11c3.500 0 6-1.500 7.500-4" fill="none" stroke="url(#apr)" stroke-width="3" stroke-linecap="round"/></svg>
<div class="dl" style="left:274px;top:533px;font-size:13px">Active</div>
<div class="dl" style="left:274.500px;top:550px;font-size:13px">Presenter</div>
<!-- QQ 1 -->
<div class="a" style="left:251px;top:608px;width:46px;height:25px;background:#5c5c5c;border-top:1px solid #dfe8f0;border-bottom:1px solid #3a6ab0"></div>
<div class="a" style="left:266px;top:616px;width:16px;height:9px;background:#fff;border-top:2px solid #3a6ad0"></div>
<div class="dl" style="left:274px;top:639px;font-size:12.500px">QQ截图</div>
<div class="dl" style="left:274.500px;top:655px;font-size:12.300px">20170204...</div>
<!-- QQ 2 -->
<div class="a" style="left:251px;top:727px;width:46px;height:10px;background:#e8e4e4;border-top:2px solid #e06a5a"></div>
<div class="a" style="left:254px;top:731px;width:30px;height:4px;background:repeating-linear-gradient(90deg,#bbb 0 3px,#eee 3px 5px)"></div>
<div class="a" style="left:289px;top:731px;width:4px;height:4px;background:#e0603a"></div>
<div class="dl" style="left:274px;top:744px;font-size:12.500px">QQ截图</div>
<div class="dl" style="left:274.500px;top:760px;font-size:12.300px">20170204...</div>
<!-- folder 2-4 -->
<svg style="left:866px;top:276px" width="33" height="43" viewBox="866 276 33 43">
<path d="M870 277H892L896 281V304.500L898 306.500V316.500H880V279z" fill="#f3d27c"/>
<rect x="886.500" y="285" width="7.500" height="31.500" fill="#eceff4"/><path d="M888 288h5M888 291h5M888 294h5M888 300.500h5M888 297h5" stroke="#9fc0e8" stroke-width="1.200"/><path d="M888 301h5.500v3.500H888z" fill="#3f8fe0"/><path d="M888 304.500h5.500v1.500H888z" fill="#2a3f60"/>
<path d="M878 279L887.500 284.500V316L878 318z" fill="#f2cf74"/>
<path d="M867 277L878 279V318.500L867 310.500z" fill="#fae2a0"/>
</svg>
<div class="dl" style="left:882px;top:323px;font-size:13px">2-4</div>
<style>
.e{position:absolute;white-space:nowrap;line-height:16px;font-size:12px;color:#1a1a1a}
.e.d{color:#8f8f8f}
.e.c{transform:translateX(-50%)}
.nv{position:absolute;white-space:nowrap;line-height:16px;font-size:12.500px;color:#1a1a1a}
</style>
<!-- explorer window -->
<div class="a" style="left:977px;top:160px;width:620px;height:720px;background:#fff"></div>
<div class="a" style="left:977px;top:160px;width:620px;height:1px;background:#2e2e2e"></div>
<!-- quick access toolbar -->
<svg style="left:985px;top:166px" width="96" height="20" viewBox="985 166 96 20">
<path d="M987 167h12v15.500h-12z" fill="#f6d67c"/><path d="M987 167h1.500v15.500H987z" fill="#e8bf5a"/><path d="M997 178h2.500v4.500H997z" fill="#e9c46a"/>
<path d="M1008.500 169v11" stroke="#b0b0b0"/>
<path d="M1020.500 168.500h8l3.500 3.500v11.500h-11.500z" fill="#fff" stroke="#8a8a8a"/><path d="M1023 176.500l2.500 2.500 4.500-5" fill="none" stroke="#e0501a" stroke-width="1.400"/>
<path d="M1042 168h12v15.500h-12z" fill="#f6d67c"/><path d="M1042 168h1.500v15.500h-1.500z" fill="#e8bf5a"/><path d="M1052 179h2.500v4.500h-2.500z" fill="#e9c46a"/>
<path d="M1063 174h7v1.300h-7zM1063 177h7l-3.500 3.500z" fill="#222"/>
<path d="M1078.500 169v11" stroke="#b0b0b0"/>
</svg>
<div class="a" style="left:1194px;top:164px;width:86px;height:27px;background:#ebcdf7"></div>
<div class="e" style="left:1201px;top:170px;color:#444">应用程序工具</div>
<div class="e" style="left:1293px;top:168px;color:#8f8f8f;font-size:12.500px">6.0.5</div>
<!-- tabs -->
<div class="a" style="left:977px;top:191px;width:56px;height:23px;background:#1979ca"></div>
<div class="e" style="left:993px;top:195px;color:#fff">文件</div>
<div class="a" style="left:977px;top:216px;width:620px;height:110px;background:#f5f6f7;border-top:1px solid #dadbdc;border-bottom:1px solid #dadbdc"></div>
<div class="a" style="left:1033px;top:191px;width:52px;height:26px;background:#f5f6f7;border:1px solid #dadbdc;border-bottom:none"></div>
<div class="e" style="left:1047px;top:196px">主页</div>
<div class="e" style="left:1100px;top:196px">共享</div>
<div class="e" style="left:1153px;top:196px">查看</div>
<div class="a" style="left:1194px;top:191px;width:86px;height:25px;border-left:1px solid #e4e4e4;border-right:1px solid #e4e4e4;background:#fff"></div>
<div class="e" style="left:1224px;top:196px">管理</div>
<!-- ribbon content -->
<svg style="left:1001px;top:230px" width="22" height="22" viewBox="0 0 22 22"><path d="M12.500 1.500l8 8-2.500 1-3.500 3.500-.5 4-9-9 4-.5L12.500 4z" fill="#a4bdd2"/><path d="M8 13.500L1.500 20.500" stroke="#a4bdd2" stroke-width="2.200"/></svg>
<div class="e d c" style="left:1011.500px;top:261px">固定到“快</div>
<div class="e d c" style="left:1011px;top:278px">速访问”</div>
<svg style="left:1050px;top:227px" width="25" height="29" viewBox="0 0 25 29"><path d="M0.500 0.500h10l4 4v15h-14z" fill="#fff" stroke="#9a9a9a"/><path d="M2.500 6.500h9M2.500 9h9M2.500 11.500h9M2.500 14h5" stroke="#7ab0e8" stroke-width="1"/><path d="M8.500 8.500h10.500l4.500 4.500v15.500h-15z" fill="#fff" stroke="#8a8a8a"/><path d="M19 8.500v4.500h4.500" fill="none" stroke="#8a8a8a"/><path d="M11 14.500h10M11 17h10M11 19.500h10M11 22h10M11 24.500h10" stroke="#4a90e2" stroke-width="1.200"/></svg>
<div class="e c" style="left:1061px;top:261px">复制</div>
<svg style="left:1093px;top:226px" width="22" height="30" viewBox="0 0 22 30"><rect x="0.800" y="3.800" width="20" height="25" rx="1" fill="#8f98c8"/><rect x="2.800" y="6" width="16" height="21" fill="#f4f8ff"/><path d="M4 9h13.500M4 11.500h13.500M4 14h13.500M4 16.500h13.500M4 19h13.500M4 21.500h13.500M4 24h13.500" stroke="#c4d8f4" stroke-width="1"/><path d="M6 5.500V3h3a2 2 0 0 1 4 0h3v2.500z" fill="#b8bcc8" stroke="#8a8ea0" stroke-width="0.600"/></svg>
<div class="e d c" style="left:1103px;top:261px">粘贴</div>
<svg style="left:1088px;top:281px" width="13" height="17" viewBox="0 0 13 17" fill="none"><path d="M2.500 0.500l5.500 11M10.500 0.500L5 11.500" stroke="#7a7a7a" stroke-width="1.100"/><circle cx="3.300" cy="13.500" r="2.300" stroke="#1565c0" stroke-width="1.500"/><circle cx="9.700" cy="13.500" r="2.300" stroke="#1565c0" stroke-width="1.500"/></svg>
<div class="e" style="left:1105px;top:281px">剪切</div>
<svg style="left:1136px;top:229px" width="16" height="10" viewBox="0 0 16 10"><rect x="0.500" y="0.500" width="14.500" height="8.500" fill="#dcecf8" stroke="#8ab0d0"/><path d="M2.500 3l2 4M5.500 3l2 4" stroke="#222" stroke-width="0.900"/><path d="M9 7h1M11 7h1M13 7h1" stroke="#222"/></svg>
<div class="e" style="left:1155px;top:225px">复制路径</div>
<svg style="left:1137px;top:246px" width="14" height="17" viewBox="0 0 14 17"><rect x="0.800" y="2.800" width="12" height="13.500" rx="1" fill="#f4f8ff" stroke="#9aa0c8" stroke-width="1.400"/><rect x="4" y="0.800" width="6" height="3.500" fill="#c8ccd8" stroke="#9aa0b0" stroke-width="0.600"/><path d="M4.500 12.500v-3.500h3.500M8 7l2 2-2 2" fill="none" stroke="#7a88c0" stroke-width="1.300"/></svg>
<div class="e d" style="left:1155px;top:247px">粘贴快捷方式</div>
<div class="e" style="left:1089px;top:306px;color:#555">剪贴板</div>
<div class="a" style="left:1237px;top:221px;width:1px;height:100px;background:#e2e3e4"></div>
<svg style="left:1250px;top:227px" width="30" height="30" viewBox="0 0 30 30"><path d="M3 0.500h19.500v27H3z" fill="#f8d77c"/><path d="M3 0.500h2v27H3z" fill="#e8bd55"/><path d="M3 26.500h19.500v1.500H3z" fill="#e0b040"/><path d="M13.500 21l8-7v4h7v6h-7v4z" fill="#2f8fe0"/></svg>
<div class="e c" style="left:1262px;top:261px">移动到</div>
<svg style="left:1261px;top:277px" width="6" height="3"><path d="M0 0h6l-3 3z" fill="#222"/></svg>
<svg style="left:1292px;top:225px" width="30" height="32" viewBox="0 0 30 32"><path d="M2 2.500h19.500v27H2z" fill="#f8d77c"/><path d="M2 2.500h2v27H2z" fill="#e8bd55"/><path d="M2 28h19.500v1.500H2z" fill="#e0b040"/><path d="M11.500 0.500h8l3.500 3.500v10h-11.500z" fill="#fff" stroke="#9a9a9a" stroke-width="0.800"/><path d="M16 4.500h9l3.500 3.500v12h-12.500z" fill="#fff" stroke="#8a8a8a" stroke-width="0.800"/><path d="M18 9.500h8.500M18 11.500h8.500M18 13.500h8.500M18 15.500h8.500M18 17.500h8.500" stroke="#4a90e2" stroke-width="1"/></svg>
<div class="e c" style="left:1304px;top:261px">复制到</div>
<svg style="left:1303px;top:277px" width="6" height="3"><path d="M0 0h6l-3 3z" fill="#222"/></svg>
<div class="a" style="left:1330px;top:235px;width:1px;height:52px;background:#e2e3e4"></div>
<svg style="left:1342px;top:229px" width="26" height="25" viewBox="0 0 26 25"><path d="M2.500 2.500l21 20M23.500 2.500l-21 20" stroke="#e01414" stroke-width="4.200"/></svg>
<div class="e c" style="left:1354px;top:261px">删除</div>
<svg style="left:1353.500px;top:278px" width="6" height="3"><path d="M0 0h6l-3 3z" fill="#222"/></svg>
<svg style="left:1382px;top:228px" width="31" height="28" viewBox="0 0 31 28"><rect x="0.800" y="8.800" width="26" height="10.500" fill="#fff" stroke="#8a8a8a" stroke-width="1.200"/><rect x="3" y="11" width="12" height="6" fill="#2f8fe0"/><path d="M22.500 1.500v25M17.500 0.800c3 0 5 .7 5 2.700 0-2 2-2.700 5-2.700M17.500 27.200c3 0 5-.7 5-2.700 0 2 2 2.700 5 2.700" fill="none" stroke="#555" stroke-width="1.700"/></svg>
<div class="e c" style="left:1396px;top:261px">重命名</div>
<div class="e" style="left:1318px;top:306px;color:#555">组织</div>
<div class="a" style="left:1424px;top:221px;width:1px;height:100px;background:#e2e3e4"></div>
<svg style="left:1437px;top:228px" width="22" height="27" viewBox="0 0 22 27"><path d="M1 2.500l10-2v25l-10 1z" fill="#e9bf58"/><path d="M3 1.500h14l3.500 3v18l-9.500 3.500H3z" fill="#f8dc8c"/><path d="M1 2.500l9 3v21l-9-1z" fill="#f3cd6c"/><path d="M17 16h3.500v6H17z" fill="#f0d488"/></svg>
<div class="e c" style="left:1449px;top:261px">新建</div>
<div class="e c" style="left:1449px;top:278px">文件夹</div>
<svg style="left:1474px;top:225px" width="17" height="17" viewBox="0 0 17 17"><rect x="0.500" y="0.500" width="8" height="7" fill="#dcecf8" stroke="#5a8ab8"/><path d="M1 2h7" stroke="#2f6fb0" stroke-width="1.500"/><rect x="5.500" y="4.500" width="7" height="8" fill="#fff" stroke="#8a8a8a"/><rect x="8.500" y="7.500" width="7" height="9" fill="#fff" stroke="#8a8a8a"/></svg>
<div class="e" style="left:1493px;top:224px">新建项目</div>
<svg style="left:1546px;top:231px" width="6" height="3"><path d="M0 0h6l-3 3z" fill="#222"/></svg>
<svg style="left:1474px;top:247px" width="17" height="17" viewBox="0 0 17 17"><path d="M5.500 1.500h7l3 3v11.500h-10z" fill="#fff" stroke="#8a8a8a"/><path d="M0.500 4.500h6M1.500 7h5M2.500 2l-1 7" stroke="#2f6fb0" stroke-width="1"/></svg>
<div class="e" style="left:1493px;top:246px">轻松访问</div>
<svg style="left:1546px;top:253px" width="6" height="3"><path d="M0 0h6l-3 3z" fill="#222"/></svg>
<div class="e" style="left:1480px;top:306px;color:#555">新建</div>
<div class="a" style="left:1562px;top:221px;width:1px;height:100px;background:#e2e3e4"></div>
<div class="a" style="left:1575px;top:229px;width:5px;height:26px;border:1px solid #8a8a8a;background:#fff"></div>
<div class="e" style="left:1574px;top:261px">属</div>
<!-- address bar -->
<svg style="left:989px;top:335px" width="90" height="16" viewBox="989 335 90 16" fill="none" stroke-width="1.500">
<path d="M1002 343.500h-11.500M995.500 338.500l-5 5 5 5" stroke="#555"/>
<path d="M1020 343.500h11.500M1026.500 338.500l5 5-5 5" stroke="#d0d0d0"/>
<path d="M1046 341l3.500 3.500 3.500-3.500" stroke="#666" stroke-width="1.300"/>
<path d="M1070 349.500v-12.500M1064.500 342.500l5.500-5.500 5.500 5.500" stroke="#555"/>
</svg>
<div class="a" style="left:1083px;top:330px;width:520px;height:24px;border:1px solid #d9d9d9;background:#fff"></div>
<svg style="left:1088px;top:333px" width="14" height="16" viewBox="0 0 14 16"><path d="M0 0h12.500v15.500H0z" fill="#f8d87e"/><path d="M0 0h1.500v15.500H0z" fill="#ecc464"/><path d="M10 10.500h3v5h-3z" fill="#eac764"/></svg>
<div class="e" style="left:1125px;top:334px;font-size:12.500px;word-spacing:0">2-4</div>
<div class="e" style="left:1168.500px;top:334px;font-size:12.500px">1</div>
<div class="e" style="left:1201px;top:334px;font-size:12.500px">6.0.5</div>
<svg style="left:1109px;top:338px" width="136" height="9" viewBox="1109 338 136 9" fill="none" stroke="#555" stroke-width="1.200"><path d="M1110.500 339l3.300 3.500-3.300 3.500M1154.500 339l3.300 3.500-3.300 3.500M1186.500 339l3.300 3.500-3.300 3.500M1238.500 339l3.300 3.500-3.300 3.500"/></svg>
<!-- nav pane -->
<div class="a" style="left:1135px;top:361px;width:1px;height:520px;background:#eeeeee"></div>
<div class="a" style="left:977px;top:377px;width:156px;height:24px;background:#d9d9d9"></div>
<svg style="left:1002px;top:382px" width="16" height="14" viewBox="0 0 16 14"><path d="M9 0.500l1.900 4.200 4.600.4-3.500 3 1.100 4.500L9 10.200l-4.100 2.400L6 8.100 2.500 5.100l4.600-.4z" fill="#2f8fe0"/><path d="M0.500 8.500l3-1M0.500 11l3.500-2M2 13l3-2.500" stroke="#2f8fe0" stroke-width="0.900"/></svg>
<div class="nv" style="left:1022px;top:381px;font-size:12px">快速访问</div>
<svg style="left:1009px;top:405px" width="17" height="17" viewBox="0 0 17 17"><path d="M5 0h7v7.500h4.500L8.500 16 .5 7.500H5z" fill="#2f8fe0"/><path d="M5 0h7v1.500H5z" fill="#5aaaf0"/></svg>
<div class="nv" style="left:1030px;top:405px;font-size:12px">下载</div>
<svg style="left:1009px;top:431px" width="17" height="13" viewBox="0 0 17 13"><rect x="0" y="0" width="16.500" height="12.500" fill="#1e90f0"/><rect x="0" y="10.500" width="16.500" height="2" fill="#1070c8"/><path d="M2 11.500h1M13 11.500h2" stroke="#fff" stroke-width="0.800"/></svg>
<div class="nv" style="left:1030px;top:429px;font-size:12px">桌面</div>
<svg style="left:1011px;top:453px" width="13" height="17" viewBox="0 0 13 17"><path d="M0.500 0.500h8l3.500 3.500v12h-11.500z" fill="#fff" stroke="#8a8a8a"/><path d="M3 4.500h4M3 7h6M3 9.500h3M7 9.500h2.500M3 12h2.500M6.500 12h3M3 14h6" stroke="#4a80c8" stroke-width="1"/></svg>
<div class="nv" style="left:1030px;top:453px;font-size:12px">文档</div>
<svg style="left:1119px;top:407px" width="12" height="12" viewBox="0 0 12 12"><path d="M6.500 0.500l5 5-1.500.5-2 2-.3 2.500L2.500 5.300 5 5l2-2z" fill="#8a8a8a"/><path d="M4.500 7.500L0.800 11.200" stroke="#8a8a8a" stroke-width="1.300"/></svg>
<svg style="left:1119px;top:431px" width="12" height="12" viewBox="0 0 12 12"><path d="M6.500 0.500l5 5-1.500.5-2 2-.3 2.500L2.500 5.300 5 5l2-2z" fill="#8a8a8a"/><path d="M4.500 7.500L0.800 11.200" stroke="#8a8a8a" stroke-width="1.300"/></svg>
<svg style="left:1119px;top:455px" width="12" height="12" viewBox="0 0 12 12"><path d="M6.500 0.500l5 5-1.500.5-2 2-.3 2.500L2.500 5.300 5 5l2-2z" fill="#8a8a8a"/><path d="M4.500 7.500L0.800 11.200" stroke="#8a8a8a" stroke-width="1.300"/></svg>
<svg style="left:1001px;top:485px" width="17" height="16" viewBox="0 0 17 16"><rect x="0.500" y="0.500" width="16" height="10.500" fill="#5ab0f4" stroke="#4a7ab0"/><path d="M1 1l15 9.500" stroke="#8accff" stroke-width="3" opacity=".5"/><path d="M6 12.500h5M3 14.500h11" stroke="#4a7ab0" stroke-width="1.400"/></svg>
<div class="nv" style="left:1022px;top:485px;font-size:12px">此电脑</div>
<svg style="left:1010px;top:511px" width="15" height="13" viewBox="0 0 15 13"><path d="M2 7h11l1.500 2.500h-14z" fill="#c8c8c8"/><rect x="0.500" y="9" width="14" height="3.500" fill="#4a4a4a"/><rect x="10.500" y="10" width="2.500" height="1.500" fill="#44e044"/></svg>
<div class="nv" style="left:1030px;top:509px;font-size:12.200px">本地磁盘 (A:)</div>
<svg style="left:1010px;top:535px" width="15" height="13" viewBox="0 0 15 13"><path d="M0 0h2.500v2.500H0zM3.500 0H6v2.500H3.500zM0 3.500h2.500V6H0zM3.500 3.500H6V6H3.500z" fill="#1e90f0"/><path d="M2 7h11l1.500 2.500h-14z" fill="#c8c8c8"/><rect x="0.500" y="9" width="14" height="3.500" fill="#4a4a4a"/><rect x="10.500" y="10" width="2.500" height="1.500" fill="#44e044"/></svg>
<div class="nv" style="left:1030px;top:533px;font-size:12.200px">windows10 (C:)</div>
<svg style="left:1010px;top:559px" width="15" height="13" viewBox="0 0 15 13"><path d="M2 7h11l1.500 2.500h-14z" fill="#c8c8c8"/><rect x="0.500" y="9" width="14" height="3.500" fill="#4a4a4a"/><rect x="10.500" y="10" width="2.500" height="1.500" fill="#44e044"/></svg>
<div class="nv" style="left:1030px;top:557px;font-size:12.200px">安装软件 (D:)</div>
<svg style="left:1010px;top:583px" width="15" height="13" viewBox="0 0 15 13"><path d="M2 7h11l1.500 2.500h-14z" fill="#c8c8c8"/><rect x="0.500" y="9" width="14" height="3.500" fill="#4a4a4a"/><rect x="10.500" y="10" width="2.500" height="1.500" fill="#44e044"/></svg>
<div class="nv" style="left:1030px;top:581px;font-size:12.200px">本地磁盘 (E:)</div>
<svg style="left:1010px;top:607px" width="15" height="13" viewBox="0 0 15 13"><path d="M2 7h11l1.500 2.500h-14z" fill="#c8c8c8"/><rect x="0.500" y="9" width="14" height="3.500" fill="#4a4a4a"/><rect x="10.500" y="10" width="2.500" height="1.500" fill="#44e044"/></svg>
<div class="nv" style="left:1030px;top:605px;font-size:12.200px">笔记本资料 (F:)</div>
<svg style="left:1010px;top:631px" width="15" height="13" viewBox="0 0 15 13"><path d="M2 7h11l1.500 2.500h-14z" fill="#c8c8c8"/><rect x="0.500" y="9" width="14" height="3.500" fill="#4a4a4a"/><rect x="10.500" y="10" width="2.500" height="1.500" fill="#44e044"/></svg>
<div class="nv" style="left:1030px;top:629px;font-size:12.200px">系统相关 (G:)</div>
<svg style="left:1010px;top:655px" width="15" height="13" viewBox="0 0 15 13"><path d="M2 7h11l1.500 2.500h-14z" fill="#c8c8c8"/><rect x="0.500" y="9" width="14" height="3.500" fill="#4a4a4a"/><rect x="10.500" y="10" width="2.500" height="1.500" fill="#44e044"/></svg>
<div class="nv" style="left:1030px;top:653px;font-size:12.200px">办公资料 (H:)</div>
<svg style="left:1010px;top:679px" width="15" height="13" viewBox="0 0 15 13"><path d="M2 7h11l1.500 2.500h-14z" fill="#c8c8c8"/><rect x="0.500" y="9" width="14" height="3.500" fill="#4a4a4a"/><rect x="10.500" y="10" width="2.500" height="1.500" fill="#44e044"/></svg>
<div class="nv" style="left:1030px;top:677px;font-size:12.200px">新加卷 (I:)</div>
<svg style="left:1010px;top:703px" width="15" height="13" viewBox="0 0 15 13"><circle cx="10" cy="4.500" r="4.500" fill="#e4e4e4" stroke="#9a9a9a" stroke-width="0.800"/><circle cx="10" cy="4.500" r="1.500" fill="#fff" stroke="#9a9a9a" stroke-width="0.600"/><path d="M2 7h11l1.500 2.500h-14z" fill="#c8c8c8"/><rect x="0.500" y="9" width="14" height="3.500" fill="#4a4a4a"/><rect x="10.500" y="10" width="2.500" height="1.500" fill="#44e044"/></svg>
<div class="nv" style="left:1030px;top:701px;font-size:12.200px">CD 驱动器 (K:)</div>
<!-- file list -->
<svg style="left:1274px;top:360px" width="9" height="6" fill="none" stroke="#7a7a7a" stroke-width="1"><path d="M0.500 5l4-4 4 4"/></svg>
<div class="e" style="left:1154px;top:367px;color:#4c607a">名称</div>
<div class="e" style="left:1415px;top:367px;color:#4c607a">修改日期</div>
<div class="e" style="left:1535px;top:367px;color:#4c607a">类型</div>
<div class="a" style="left:1408px;top:361px;width:1px;height:27px;background:#e5e5e5"></div>
<div class="a" style="left:1528px;top:361px;width:1px;height:27px;background:#e5e5e5"></div>
<svg style="left:1156px;top:396px" width="15" height="17" viewBox="0 0 15 17"><path d="M0.500 0h13v16.500h-13z" fill="#f8d87e"/><path d="M0.500 0H2v16.500H0.500z" fill="#ecc464"/><path d="M11 11h3v5.500h-3z" fill="#eac764"/></svg>
<div class="nv" style="left:1175px;top:397px;font-size:12.400px">Crack UZ1</div>
<div class="nv" style="left:1415px;top:397px;color:#6d6d6d"><span style="letter-spacing:0.300px">2017/1/10 </span><span style="font-size:12px">星期...</span></div>
<div class="nv" style="left:1535px;top:397px;color:#6d6d6d;font-size:12px">文件夹</div>
<div class="a" style="left:1151px;top:415px;width:450px;height:22px;background:#d9d9d9"></div>
<svg style="left:1156px;top:418px" width="15" height="15" viewBox="0 0 15 15"><circle cx="7.500" cy="7.500" r="7" fill="#ececec"/><path d="M10.300 10.500V7.200a2.800 2.800 0 1 0-2.800 3c1 0 1.700-.4 2.100-1" fill="none" stroke="#e8552a" stroke-width="1.100" stroke-linecap="round"/></svg>
<div class="nv" style="left:1175px;top:418px;font-size:12.300px">ActivePresenter_v6.0.5_setup.exe</div>
<div class="nv" style="left:1415px;top:418px;color:#6d6d6d"><span style="letter-spacing:0.300px">2017/1/10 </span><span style="font-size:12px">星期...</span></div>
<div class="nv" style="left:1535px;top:418px;color:#6d6d6d;font-size:12px">应用程序</div>
</div></div>
<!-- canvas scrollbars -->
<div class="a" style="left:1579px;top:128px;width:16px;height:752px;background:#f0f0f0"></div>
<div class="a" style="left:1579px;top:145px;width:15px;height:445px;background:#cdcdcd"></div>
<svg style="left:1581px;top:133px" width="11" height="7" fill="none" stroke="#505050" stroke-width="2.100"><path d="M1.800 5.800l3.700-3.700 3.700 3.700"/></svg>
<svg style="left:1581px;top:851px" width="11" height="7" fill="none" stroke="#505050" stroke-width="2.100"><path d="M1.800 1.200l3.700 3.700 3.700-3.700"/></svg>
<div class="a" style="left:204px;top:863px;width:1393px;height:19px;background:#fafafa"></div><div class="a" style="left:205px;top:864px;width:1390px;height:16px;background:#f0f0f0"></div>
<div class="a" style="left:222px;top:864px;width:922px;height:15px;background:#cdcdcd"></div>
<svg style="left:210px;top:867px" width="7" height="11" fill="none" stroke="#505050" stroke-width="2.100"><path d="M5.800 1.800L2.100 5.500l3.700 3.700"/></svg>
<svg style="left:1566px;top:867px" width="7" height="11" fill="none" stroke="#505050" stroke-width="2.100"><path d="M1.200 1.800l3.700 3.700-3.700 3.700"/></svg>
<div class="a" style="left:1px;top:882px;width:1596px;height:1px;background:#9a9a9a"></div><div class="a" style="left:1px;top:883px;width:1596px;height:1px;background:#fcfcfc"></div>
<!-- right panel -->
<div class="a" style="left:1597px;top:128px;width:1px;height:896px;background:#8a8a8a"></div>
<div class="a" style="left:1598px;top:128px;width:321px;height:896px;background:#fafafa"></div>
<div class="a" style="left:1598px;top:128px;width:321px;height:22px;background:#f0f0f0"></div>
<div class="t" style="left:1603px;top:130px;font-weight:bold;font-size:10.500px;letter-spacing:1.500px;color:#333;word-spacing:1.500px">属性 – 幻灯片</div>
<svg style="left:1888px;top:132px" width="10" height="12" viewBox="0 0 10 12" fill="none" stroke="#333" stroke-width="1"><path d="M3 1.500h4.500M3.500 1.500v5.500M1.500 7.500h7.500M5.200 7.500v4" /><path d="M6.800 1.500v5.500" stroke-width="1.700"/></svg>
<svg style="left:1904px;top:134px" width="8" height="8" fill="none" stroke="#333" stroke-width="1.300"><path d="M0.500 0.500l7.500 7.500M8 0.500l-7.500 7.500"/></svg>
<div class="a" style="left:1598px;top:150px;width:321px;height:1px;background:#a8a8a8"></div>
<div class="a" style="left:1599px;top:151px;width:320px;height:21px;background:#cce0f5"></div><div class="a" style="left:1598px;top:172px;width:321px;height:1px;background:#a4a8ae"></div><svg style="left:1606px;top:156px" width="7" height="11"><path d="M0 0l6.500 5.500L0 11z" fill="#333"/></svg><div class="t" style="left:1621px;top:154px;color:#111">一般</div>
<div class="a" style="left:1599px;top:173px;width:320px;height:21px;background:#cce0f5"></div><div class="a" style="left:1598px;top:194px;width:321px;height:1px;background:#a4a8ae"></div><svg style="left:1606px;top:178px" width="7" height="11"><path d="M0 0l6.500 5.500L0 11z" fill="#333"/></svg><div class="t" style="left:1621px;top:176px;color:#111">计时&amp;过渡</div>
<div class="a" style="left:1599px;top:195px;width:320px;height:21px;background:#cce0f5"></div><div class="a" style="left:1598px;top:216px;width:321px;height:1px;background:#a4a8ae"></div><svg style="left:1606px;top:200px" width="7" height="11"><path d="M0 0l6.500 5.500L0 11z" fill="#333"/></svg><div class="t" style="left:1621px;top:198px;color:#111">背景</div>
<div class="a" style="left:1599px;top:217px;width:320px;height:21px;background:#cce0f5"></div><div class="a" style="left:1598px;top:238px;width:321px;height:1px;background:#a4a8ae"></div><svg style="left:1606px;top:222px" width="7" height="11"><path d="M0 0l6.500 5.500L0 11z" fill="#333"/></svg><div class="t" style="left:1621px;top:220px;color:#111">可用性</div>
<div class="a" style="left:1599px;top:239px;width:320px;height:21px;background:#cce0f5"></div><div class="a" style="left:1598px;top:260px;width:321px;height:1px;background:#a4a8ae"></div><svg style="left:1606px;top:244px" width="7" height="11"><path d="M0 0l6.500 5.500L0 11z" fill="#333"/></svg><div class="t" style="left:1621px;top:242px;color:#111">事件</div>
<div class="a" style="left:1598px;top:260px;width:321px;height:1px;background:#fafafa"></div>
<div class="a" style="left:1912px;top:686px;width:8px;height:42px;background:#3a3a3a;border-radius:2px 0 0 2px;box-shadow:-1px 1px 3px rgba(0,0,0,.35)"></div><div class="a" style="left:1914px;top:689px;width:3px;height:36px;background:#545454"></div><div class="a" style="left:1915px;top:689px;width:2px;height:18px;background:repeating-linear-gradient(#2a8a2a 0 1px,#3c4c3c 1px 2px)"></div>
<!-- timeline -->
<div class="a" style="left:1px;top:884px;width:1596px;height:27px;background:#f0f0f0"></div>
<div class="t" style="left:8px;top:889px;font-weight:bold;font-size:10.500px;letter-spacing:1.700px;color:#222">时间轴</div>
<div class="a" style="left:1px;top:911px;width:1594px;height:1px;background:#5a5a5a"></div>
<div class="a" style="left:2px;top:912px;width:1592px;height:24px;background:linear-gradient(#fdfdfd,#f4f4f4 45%,#dcdcdc)"></div>
<div class="a" style="left:1px;top:936px;width:1594px;height:1px;background:#5a5a5a"></div>
<div class="a" style="left:1594px;top:911px;width:1px;height:26px;background:#5a5a5a"></div>
<div class="a" style="left:1px;top:911px;width:1px;height:113px;background:#5a5a5a"></div>
<div class="a" style="left:201px;top:937px;width:1378px;height:87px;background:#fff"></div>
<svg style="left:201px;top:912px" width="1393" height="25" viewBox="201 912 1393 25" stroke="#444" stroke-width="1" shape-rendering="crispEdges"><path d="M206.5 924v12M256.5 924v12M306.5 924v12M356.5 924v12M406.5 924v12M456.5 924v12M506.5 924v12M556.5 924v12M606.5 924v12M656.5 924v12M706.5 924v12M756.5 924v12M806.5 924v12M856.5 924v12M906.5 924v12M956.5 924v12M1006.5 924v12M1056.5 924v12M1106.5 924v12M1156.5 924v12M1206.5 924v12M1256.5 924v12M1306.5 924v12M1356.5 924v12M1406.5 924v12M1456.5 924v12M1506.5 924v12M1556.5 924v12"/><path d="M231.5 928v8M281.5 928v8M331.5 928v8M381.5 928v8M431.5 928v8M481.5 928v8M531.5 928v8M581.5 928v8M631.5 928v8M681.5 928v8M731.5 928v8M781.5 928v8M831.5 928v8M881.5 928v8M931.5 928v8M981.5 928v8M1031.5 928v8M1081.5 928v8M1131.5 928v8M1181.5 928v8M1231.5 928v8M1281.5 928v8M1331.5 928v8M1381.5 928v8M1431.5 928v8M1481.5 928v8M1531.5 928v8M1581.5 928v8"/><path d="M211.5 932v4M216.5 932v4M221.5 932v4M226.5 932v4M236.5 932v4M241.5 932v4M246.5 932v4M251.5 932v4M261.5 932v4M266.5 932v4M271.5 932v4M276.5 932v4M286.5 932v4M291.5 932v4M296.5 932v4M301.5 932v4M311.5 932v4M316.5 932v4M321.5 932v4M326.5 932v4M336.5 932v4M341.5 932v4M346.5 932v4M351.5 932v4M361.5 932v4M366.5 932v4M371.5 932v4M376.5 932v4M386.5 932v4M391.5 932v4M396.5 932v4M401.5 932v4M411.5 932v4M416.5 932v4M421.5 932v4M426.5 932v4M436.5 932v4M441.5 932v4M446.5 932v4M451.5 932v4M461.5 932v4M466.5 932v4M471.5 932v4M476.5 932v4M486.5 932v4M491.5 932v4M496.5 932v4M501.5 932v4M511.5 932v4M516.5 932v4M521.5 932v4M526.5 932v4M536.5 932v4M541.5 932v4M546.5 932v4M551.5 932v4M561.5 932v4M566.5 932v4M571.5 932v4M576.5 932v4M586.5 932v4M591.5 932v4M596.5 932v4M601.5 932v4M611.5 932v4M616.5 932v4M621.5 932v4M626.5 932v4M636.5 932v4M641.5 932v4M646.5 932v4M651.5 932v4M661.5 932v4M666.5 932v4M671.5 932v4M676.5 932v4M686.5 932v4M691.5 932v4M696.5 932v4M701.5 932v4M711.5 932v4M716.5 932v4M721.5 932v4M726.5 932v4M736.5 932v4M741.5 932v4M746.5 932v4M751.5 932v4M761.5 932v4M766.5 932v4M771.5 932v4M776.5 932v4M786.5 932v4M791.5 932v4M796.5 932v4M801.5 932v4M811.5 932v4M816.5 932v4M821.5 932v4M826.5 932v4M836.5 932v4M841.5 932v4M846.5 932v4M851.5 932v4M861.5 932v4M866.5 932v4M871.5 932v4M876.5 932v4M886.5 932v4M891.5 932v4M896.5 932v4M901.5 932v4M911.5 932v4M916.5 932v4M921.5 932v4M926.5 932v4M936.5 932v4M941.5 932v4M946.5 932v4M951.5 932v4M961.5 932v4M966.5 932v4M971.5 932v4M976.5 932v4M986.5 932v4M991.5 932v4M996.5 932v4M1001.5 932v4M1011.5 932v4M1016.5 932v4M1021.5 932v4M1026.5 932v4M1036.5 932v4M1041.5 932v4M1046.5 932v4M1051.5 932v4M1061.5 932v4M1066.5 932v4M1071.5 932v4M1076.5 932v4M1086.5 932v4M1091.5 932v4M1096.5 932v4M1101.5 932v4M1111.5 932v4M1116.5 932v4M1121.5 932v4M1126.5 932v4M1136.5 932v4M1141.5 932v4M1146.5 932v4M1151.5 932v4M1161.5 932v4M1166.5 932v4M1171.5 932v4M1176.5 932v4M1186.5 932v4M1191.5 932v4M1196.5 932v4M1201.5 932v4M1211.5 932v4M1216.5 932v4M1221.5 932v4M1226.5 932v4M1236.5 932v4M1241.5 932v4M1246.5 932v4M1251.5 932v4M1261.5 932v4M1266.5 932v4M1271.5 932v4M1276.5 932v4M1286.5 932v4M1291.5 932v4M1296.5 932v4M1301.5 932v4M1311.5 932v4M1316.5 932v4M1321.5 932v4M1326.5 932v4M1336.5 932v4M1341.5 932v4M1346.5 932v4M1351.5 932v4M1361.5 932v4M1366.5 932v4M1371.5 932v4M1376.5 932v4M1386.5 932v4M1391.5 932v4M1396.5 932v4M1401.5 932v4M1411.5 932v4M1416.5 932v4M1421.5 932v4M1426.5 932v4M1436.5 932v4M1441.5 932v4M1446.5 932v4M1451.5 932v4M1461.5 932v4M1466.5 932v4M1471.5 932v4M1476.5 932v4M1486.5 932v4M1491.5 932v4M1496.5 932v4M1501.5 932v4M1511.5 932v4M1516.5 932v4M1521.5 932v4M1526.5 932v4M1536.5 932v4M1541.5 932v4M1546.5 932v4M1551.5 932v4M1561.5 932v4M1566.5 932v4M1571.5 932v4M1576.5 932v4M1586.5 932v4M1591.5 932v4" stroke="#777"/></svg>
<div class="t" style="left:206px;top:912px;font:11px/14px 'Liberation Serif',serif;color:#222">0:00</div><div class="t" style="left:256.5px;top:912px;font:11px/14px 'Liberation Serif',serif;color:#222;transform:translateX(-50%)">0:01</div><div class="t" style="left:306.5px;top:912px;font:11px/14px 'Liberation Serif',serif;color:#222;transform:translateX(-50%)">0:02</div><div class="t" style="left:356.5px;top:912px;font:11px/14px 'Liberation Serif',serif;color:#222;transform:translateX(-50%)">0:03</div><div class="t" style="left:406.5px;top:912px;font:11px/14px 'Liberation Serif',serif;color:#222;transform:translateX(-50%)">0:04</div><div class="t" style="left:456.5px;top:912px;font:11px/14px 'Liberation Serif',serif;color:#222;transform:translateX(-50%)">0:05</div><div class="t" style="left:506.5px;top:912px;font:11px/14px 'Liberation Serif',serif;color:#222;transform:translateX(-50%)">0:06</div><div class="t" style="left:556.5px;top:912px;font:11px/14px 'Liberation Serif',serif;color:#222;transform:translateX(-50%)">0:07</div><div class="t" style="left:606.5px;top:912px;font:11px/14px 'Liberation Serif',serif;color:#222;transform:translateX(-50%)">0:08</div><div class="t" style="left:656.5px;top:912px;font:11px/14px 'Liberation Serif',serif;color:#222;transform:translateX(-50%)">0:09</div><div class="t" style="left:706.5px;top:912px;font:11px/14px 'Liberation Serif',serif;color:#222;transform:translateX(-50%)">0:10</div><div class="t" style="left:756.5px;top:912px;font:11px/14px 'Liberation Serif',serif;color:#222;transform:translateX(-50%)">0:11</div><div class="t" style="left:806.5px;top:912px;font:11px/14px 'Liberation Serif',serif;color:#222;transform:translateX(-50%)">0:12</div><div class="t" style="left:856.5px;top:912px;font:11px/14px 'Liberation Serif',serif;color:#222;transform:translateX(-50%)">0:13</div><div class="t" style="left:906.5px;top:912px;font:11px/14px 'Liberation Serif',serif;color:#222;transform:translateX(-50%)">0:14</div><div class="t" style="left:956.5px;top:912px;font:11px/14px 'Liberation Serif',serif;color:#222;transform:translateX(-50%)">0:15</div><div class="t" style="left:1006.5px;top:912px;font:11px/14px 'Liberation Serif',serif;color:#222;transform:translateX(-50%)">0:16</div><div class="t" style="left:1056.5px;top:912px;font:11px/14px 'Liberation Serif',serif;color:#222;transform:translateX(-50%)">0:17</div><div class="t" style="left:1106.5px;top:912px;font:11px/14px 'Liberation Serif',serif;color:#222;transform:translateX(-50%)">0:18</div><div class="t" style="left:1156.5px;top:912px;font:11px/14px 'Liberation Serif',serif;color:#222;transform:translateX(-50%)">0:19</div><div class="t" style="left:1206.5px;top:912px;font:11px/14px 'Liberation Serif',serif;color:#222;transform:translateX(-50%)">0:20</div><div class="t" style="left:1256.5px;top:912px;font:11px/14px 'Liberation Serif',serif;color:#222;transform:translateX(-50%)">0:21</div><div class="t" style="left:1306.5px;top:912px;font:11px/14px 'Liberation Serif',serif;color:#222;transform:translateX(-50%)">0:22</div><div class="t" style="left:1356.5px;top:912px;font:11px/14px 'Liberation Serif',serif;color:#222;transform:translateX(-50%)">0:23</div><div class="t" style="left:1406.5px;top:912px;font:11px/14px 'Liberation Serif',serif;color:#222;transform:translateX(-50%)">0:24</div><div class="t" style="left:1456.5px;top:912px;font:11px/14px 'Liberation Serif',serif;color:#222;transform:translateX(-50%)">0:25</div><div class="t" style="left:1506.5px;top:912px;font:11px/14px 'Liberation Serif',serif;color:#222;transform:translateX(-50%)">0:26</div><div class="t" style="left:1556.5px;top:912px;font:11px/14px 'Liberation Serif',serif;color:#222;transform:translateX(-50%)">0:27</div>
<div class="a" style="left:200px;top:911px;width:1px;height:113px;background:#5a5a5a"></div>
<div class="a" style="left:2px;top:937px;width:198px;height:24px;background:linear-gradient(#f4fcfc 0%,#d8f4f4 25%,#9fe4e6 55%,#5ed0d6 100%)"></div>
<div class="t" style="left:21px;top:943px;font-size:12.500px;color:#444">幻灯片</div>
<div class="a" style="left:2px;top:962px;width:198px;height:22px;background:linear-gradient(#f1f1f1,#e8e8e8);border-bottom:1px solid #c0c0c0"></div><div class="t" style="left:21px;top:966px;font:12px/16px 'Liberation Serif',serif;color:#444">System_Audio_005</div>
<div class="a" style="left:2px;top:984px;width:198px;height:22px;background:linear-gradient(#f1f1f1,#e8e8e8);border-bottom:1px solid #c0c0c0"></div><div class="t" style="left:21px;top:988px;font:12px/16px 'Liberation Serif',serif;color:#444">Audio_003</div>
<div class="a" style="left:2px;top:1006px;width:198px;height:18px;background:linear-gradient(#f1f1f1,#e8e8e8);border-bottom:1px solid #c0c0c0"></div><div class="t" style="left:21px;top:1010px;font:12px/16px 'Liberation Serif',serif;color:#444">Video_001.1</div>
<svg style="left:158px;top:917px" width="14" height="13" viewBox="0 0 14 13"><path d="M0.500 6.500C2.500 2.500 8 0.500 13 5M1.500 4C4.500 0.500 9 0.300 12.500 3" fill="none" stroke="#5a5a5a" stroke-width="1.100"/><path d="M1 8C3.500 4.200 9.500 3.800 13.200 8.500 10 11.800 4 12 1 8z" fill="#f6f6f6" stroke="#8a8a8a" stroke-width="0.700"/><circle cx="6.300" cy="7.800" r="2.900" fill="#3f8ff0"/><circle cx="6.300" cy="7.800" r="1.300" fill="#0c2a60"/><circle cx="5.300" cy="6.800" r="0.700" fill="#cfe4ff"/></svg><svg style="left:182px;top:917px" width="15" height="15" viewBox="0 0 15 15"><defs><linearGradient id="lk" x1="0" y1="0" x2="0" y2="1"><stop offset="0" stop-color="#ffe890"/><stop offset="1" stop-color="#f0b030"/></linearGradient></defs><path d="M8 5V3.200a2.300 2.300 0 0 1 4.600 0V5" fill="none" stroke="#5a5a5a" stroke-width="1.300"/><rect x="6.500" y="4.500" width="8" height="7" fill="url(#lk)" stroke="#444" stroke-width="0.900"/><path d="M9.500 7h3M11 7v2.500" stroke="#444" stroke-width="1"/><path d="M2.300 7.500V5.500a2.300 2.300 0 0 1 4.600 0v2" fill="none" stroke="#5a5a5a" stroke-width="1.300"/><rect x="0.500" y="7.500" width="8.500" height="7" fill="url(#lk)" stroke="#444" stroke-width="0.900"/><path d="M3 10h3.500M4.800 10v3" stroke="#444" stroke-width="1.100"/></svg><svg style="left:158px;top:965px" width="14" height="13" viewBox="0 0 14 13"><path d="M0.500 6.500C2.500 2.500 8 0.500 13 5M1.500 4C4.500 0.500 9 0.300 12.500 3" fill="none" stroke="#5a5a5a" stroke-width="1.100"/><path d="M1 8C3.500 4.200 9.500 3.800 13.200 8.500 10 11.800 4 12 1 8z" fill="#f6f6f6" stroke="#8a8a8a" stroke-width="0.700"/><circle cx="6.300" cy="7.800" r="2.900" fill="#3f8ff0"/><circle cx="6.300" cy="7.800" r="1.300" fill="#0c2a60"/><circle cx="5.300" cy="6.800" r="0.700" fill="#cfe4ff"/></svg><svg style="left:182px;top:964px" width="15" height="15" viewBox="0 0 15 15"><defs><linearGradient id="lk" x1="0" y1="0" x2="0" y2="1"><stop offset="0" stop-color="#ffe890"/><stop offset="1" stop-color="#f0b030"/></linearGradient></defs><path d="M7.500 6.500V4.800a2.600 2.600 0 0 1 5.200 0v1.200" fill="none" stroke="#5a5a5a" stroke-width="1.300"/><rect x="1.500" y="6.500" width="8.500" height="7.500" fill="url(#lk)" stroke="#444" stroke-width="0.900"/><path d="M4 9h3.600M5.800 9v3.300" stroke="#444" stroke-width="1.100"/></svg><svg style="left:158px;top:987px" width="14" height="13" viewBox="0 0 14 13"><path d="M0.500 6.500C2.500 2.500 8 0.500 13 5M1.500 4C4.500 0.500 9 0.300 12.500 3" fill="none" stroke="#5a5a5a" stroke-width="1.100"/><path d="M1 8C3.500 4.200 9.500 3.800 13.200 8.500 10 11.800 4 12 1 8z" fill="#f6f6f6" stroke="#8a8a8a" stroke-width="0.700"/><circle cx="6.300" cy="7.800" r="2.900" fill="#3f8ff0"/><circle cx="6.300" cy="7.800" r="1.300" fill="#0c2a60"/><circle cx="5.300" cy="6.800" r="0.700" fill="#cfe4ff"/></svg><svg style="left:182px;top:986px" width="15" height="15" viewBox="0 0 15 15"><defs><linearGradient id="lk" x1="0" y1="0" x2="0" y2="1"><stop offset="0" stop-color="#ffe890"/><stop offset="1" stop-color="#f0b030"/></linearGradient></defs><path d="M7.500 6.500V4.800a2.600 2.600 0 0 1 5.200 0v1.200" fill="none" stroke="#5a5a5a" stroke-width="1.300"/><rect x="1.500" y="6.500" width="8.500" height="7.500" fill="url(#lk)" stroke="#444" stroke-width="0.900"/><path d="M4 9h3.600M5.800 9v3.300" stroke="#444" stroke-width="1.100"/></svg><svg style="left:158px;top:1009px" width="14" height="13" viewBox="0 0 14 13"><path d="M0.500 6.500C2.500 2.500 8 0.500 13 5M1.500 4C4.500 0.500 9 0.300 12.500 3" fill="none" stroke="#5a5a5a" stroke-width="1.100"/><path d="M1 8C3.500 4.200 9.500 3.800 13.200 8.500 10 11.800 4 12 1 8z" fill="#f6f6f6" stroke="#8a8a8a" stroke-width="0.700"/><circle cx="6.300" cy="7.800" r="2.900" fill="#3f8ff0"/><circle cx="6.300" cy="7.800" r="1.300" fill="#0c2a60"/><circle cx="5.300" cy="6.800" r="0.700" fill="#cfe4ff"/></svg><svg style="left:182px;top:1008px" width="15" height="15" viewBox="0 0 15 15"><defs><linearGradient id="lk" x1="0" y1="0" x2="0" y2="1"><stop offset="0" stop-color="#ffe890"/><stop offset="1" stop-color="#f0b030"/></linearGradient></defs><path d="M7.500 6.500V4.800a2.600 2.600 0 0 1 5.200 0v1.200" fill="none" stroke="#5a5a5a" stroke-width="1.300"/><rect x="1.500" y="6.500" width="8.500" height="7.500" fill="url(#lk)" stroke="#444" stroke-width="0.900"/><path d="M4 9h3.600M5.800 9v3.300" stroke="#444" stroke-width="1.100"/></svg>
<div class="a" style="left:201px;top:961px;width:1378px;height:1px;background:#f8c4c8"></div>
<div class="a" style="left:201px;top:983px;width:1378px;height:1px;background:#f8c4c8"></div>
<div class="a" style="left:201px;top:1005px;width:1378px;height:1px;background:#f8c4c8"></div>
<div class="a" style="left:922px;top:937px;width:1px;height:87px;background:#e01030"></div>
<div class="a" style="left:206px;top:940px;width:717px;height:21px;border:1px solid #6a5af0;background:linear-gradient(#f0fcfc 0%,#d4f2f3 25%,#9ae2e5 55%,#5ed0d6 100%)"></div>
<div class="a" style="left:207px;top:962px;width:716px;height:21px;border:1px solid #7a6af0;background:linear-gradient(#f8f8f8,#e2e2e2)"></div>
<div class="a" style="left:208px;top:972px;width:714px;height:1px;background:#7a6af0"></div>
<div class="a" style="left:206px;top:984px;width:716px;height:21px;border:1px solid #7a6af0;background:linear-gradient(#f8f8f8,#e2e2e2)"></div>
<div class="a" style="left:207px;top:994px;width:714px;height:1px;background:#7a6af0"></div>
<div class="a" style="left:206px;top:1006px;width:716px;height:21px;border:1px solid #7a6af0;background:linear-gradient(#f8f8f8,#e2e2e2)"></div>
<div class="a" style="left:207px;top:1016px;width:714px;height:1px;background:#7a6af0"></div>
<div class="a" style="left:656px;top:1011px;width:1px;height:12px;background:#6a5af0"></div>
<div class="a" style="left:662px;top:1011px;width:1px;height:12px;background:#6a5af0"></div>
<div class="a" style="left:253px;top:1014px;width:1px;height:5px;background:#6a5af0"></div><div class="a" style="left:254px;top:1015px;width:1px;height:3px;background:#6a5af0"></div>
<div class="a" style="left:772px;top:1014px;width:1px;height:5px;background:#6a5af0"></div>
<div class="a" style="left:921px;top:942px;width:1px;height:17px;background:#b02030"></div>
<!-- timeline v scrollbar -->
<div class="a" style="left:1579px;top:936px;width:16px;height:88px;background:#f0f0f0"></div>
<div class="a" style="left:1579px;top:954px;width:15px;height:42px;background:#cdcdcd"></div>
<svg style="left:1581px;top:943px" width="11" height="7" fill="none" stroke="#505050" stroke-width="2.100"><path d="M1.800 5.800l3.700-3.700 3.700 3.700"/></svg>
<svg style="left:1581px;top:1012px" width="11" height="7" fill="none" stroke="#505050" stroke-width="2.100"><path d="M1.800 1.200l3.700 3.700 3.700-3.700"/></svg>
<svg style="left:1558px;top:890px" width="9" height="12" viewBox="0 0 10 12" fill="none" stroke="#333" stroke-width="1"><path d="M3 1.500h4.500M3.500 1.500v5.500M1.500 7.500h7.500M5.200 7.500v4" /><path d="M6.800 1.500v5.500" stroke-width="1.700"/></svg>
<svg style="left:1579px;top:893px" width="8" height="8" fill="none" stroke="#333" stroke-width="1.300"><path d="M0.500 0.500l7.500 7.500M8 0.500l-7.500 7.500"/></svg>
<!-- status -->
<div class="a" style="left:1px;top:1024px;width:1918px;height:25px;background:#1a66cd"></div>
<div class="t" style="left:6.500px;top:1029px;color:#fff;font-size:11.800px">已就绪</div>
<svg style="left:1660px;top:1028px" width="230" height="18" viewBox="1660 1028 230 18" fill="none" stroke="#fff">
<path d="M1662 1038h8" stroke-width="1.600"/><path d="M1676 1037.500h119" stroke-width="1"/><rect x="1733" y="1031" width="3.500" height="13" fill="#fff" stroke="none"/>
<path d="M1801 1038h8M1805 1034v8" stroke-width="1.600"/>
<rect x="1865.500" y="1029.500" width="15" height="14"/><path d="M1871.500 1033.500l1.500-1.500 1.500 1.500zM1871.500 1039.800l1.500 1.500 1.500-1.500zM1869.300 1035l-1.500 1.600 1.500 1.600zM1876.700 1035l1.500 1.600-1.500 1.600z" fill="#fff" stroke="none"/>
</svg>
<div class="t" style="left:1819px;top:1029px;color:#fff;font-size:12.500px">100%</div>
<!-- timeline toolbar -->
<div class="a" style="left:225px;top:886px;width:23px;height:22px;background:#b9dcf5;background-image:radial-gradient(#a4cdea 0.6px,transparent 0.7px);background-size:2px 2px"></div>
<svg style="left:200px;top:884px" width="700" height="26" viewBox="200 884 700 26">
<g fill="none">
<rect x="209.500" y="889" width="11" height="10" fill="#666"/><rect x="204" y="893" width="12" height="12" fill="#1a70c0" stroke="#f0f0f0" stroke-width="1"/>
<path d="M230.500 888v17M227 902.500h15" stroke="#333" stroke-width="1" stroke-dasharray="1.500 1"/><rect x="232" y="889" width="5" height="9" fill="#a8a8a8"/><path d="M236 888.500h3a5 5 0 0 1 0 10h-3z" fill="#2ea84a"/>
<path d="M259 892h-5v10.500h4.500M261 902.500h6v-10.500h-2.500" stroke="#1a70c0" stroke-width="2"/><path d="M259 888l5 4-5 4zM262 898.500l-5 4 5 4z" fill="#1a70c0"/>
<path d="M276.500 889v17M347.500 889v17M394.500 889v17M475.500 889v17M628.500 889v17M747.500 889v17M780.500 889v17M813.500 889v17" stroke="#a8a8a8" stroke-width="1"/>
<path d="M290.500 888.500v17l10-8.500z" fill="#3db83d"/>
<path d="M309.500 895.500h6l-3 3z" fill="#111"/>
<rect x="324.500" y="890.500" width="13" height="13" fill="#1a70c0"/>
<circle cx="366" cy="897" r="7" fill="#ee1010"/>
<path d="M380.500 895.500h6l-3 3z" fill="#111"/>
</g>
<g id="zm" fill="none"><circle cx="413" cy="895" r="5.300" fill="#fff" stroke="#1a70c0" stroke-width="1.400"/><path d="M405 903.500l3-3" stroke="#f09a20" stroke-width="3.600" stroke-linecap="round"/></g>
<g fill="none" transform="translate(24,0)"><circle cx="413" cy="895" r="5.300" fill="#fff" stroke="#1a70c0" stroke-width="1.400"/><path d="M405 903.500l3-3" stroke="#f09a20" stroke-width="3.600" stroke-linecap="round"/></g><g fill="none" transform="translate(48,0)"><circle cx="413" cy="895" r="5.300" fill="#fff" stroke="#1a70c0" stroke-width="1.400"/><path d="M405 903.500l3-3" stroke="#f09a20" stroke-width="3.600" stroke-linecap="round"/></g>
<path d="M410.500 893l5 4M415.500 893l-5 4" stroke="#555" stroke-width="1"/>
<path d="M433.500 895h7M435.500 893l-2 2 2 2M438.500 893l2 2-2 2" stroke="#444" stroke-width="1" fill="none"/>
<path d="M458.500 893.500h4.500v4.500M460 892h5v5" stroke="#444" stroke-width="1" fill="none"/>
<g fill="#8a8a8a" stroke="none">
<rect x="484" y="889" width="6" height="6"/><rect x="498" y="889" width="1.500" height="6"/><rect x="490" y="899" width="7" height="6"/><rect x="493" y="895" width="1" height="4"/>
<rect x="508" y="889" width="16" height="5.500"/><rect x="513" y="899" width="7" height="6"/><rect x="516" y="894" width="1" height="5"/>
<rect x="532" y="893" width="7" height="7"/><rect x="545.500" y="892" width="1.500" height="9"/>
<rect x="556" y="893" width="16" height="9" opacity=".4"/><rect x="560" y="893" width="8.500" height="9"/>
<rect x="580" y="899" width="6" height="6"/><rect x="585" y="893" width="7" height="5"/><rect x="594" y="899" width="1.500" height="6"/><rect x="588" y="889" width="1" height="4"/>
<path d="M606 891.500c1-2 3.500-2.500 5-1l2 2.500h-7z"/><path d="M611 904c1-2.500 4-3.500 6-2.500l2.500 2.500z" opacity=".6"/>
<rect x="637" y="892" width="6.500" height="11"/><rect x="646.500" y="892" width="6.500" height="11"/><rect x="638.500" y="894.500" width="3.500" height="6" fill="#f0f0f0"/><rect x="648" y="894.500" width="3.500" height="6" fill="#f0f0f0"/>
<rect x="661" y="892" width="16" height="11"/><rect x="662.500" y="894.500" width="3.500" height="6" fill="#eee"/><rect x="667.500" y="894.500" width="3.500" height="6" fill="#eee"/><rect x="672.500" y="894.500" width="3" height="6" fill="#eee"/>
<path d="M693 889.500a1.600 1.600 0 1 0 .1 0zM688 893l4-1.500 3 2 3 1-.5 1-3-.5-1 3 2.500 2v4h-1.500v-3.500l-3-2-1.500 3.500-4 1-.5-1.200 3.200-1 2-5.500-2.200.8-1 2.500-1.200-.5z"/>
<path d="M711 893.500h4l5.500-4.500v16l-5.500-4.500h-4z"/><rect x="720" y="902.500" width="6" height="1.500"/><rect x="722" y="890" width="5" height="1.300"/><rect x="724" y="888" width="1.300" height="5"/>
<path d="M734.500 895.500h6l-3 3z" fill="#777"/>
<rect x="789" y="892" width="6" height="3.500"/><rect x="798" y="892" width="6" height="3.500"/><rect x="789" y="898.500" width="6" height="3.500"/><rect x="798" y="898.500" width="6" height="3.500"/>
<path d="M833 891.500v11l-6.500-5.500z"/><path d="M854 890.500l6 6.500-6 6.500-6-6.500z"/><path d="M875.500 891.500v11l6.500-5.500z"/>
</g>
<g fill="none" stroke="#8a8a8a" stroke-width="1">
<path d="M540 890.500l7.500 12M547.500 890.500l-7.500 12" stroke="#666"/>
<path d="M559.500 889v14M559 902.500h13M568.500 892v14M556 892.500h13" stroke="#666"/>
<path d="M604.500 905.500l15-16" stroke="#777" stroke-width="1.300"/>
<path d="M645.500 888v17" stroke-dasharray="1.500 1" stroke="#555"/><path d="M644 889.500l1.500-1.500 1.500 1.500M644 903.500l1.500 1.500 1.500-1.500" stroke="#555"/>

<path d="M685 889.500h6M685 893.500h4M685 897.500h3M685 901.500h3M685 905h6" stroke="#999"/>
<path d="M796.500 888v17" stroke-dasharray="1.500 1" stroke="#555"/><path d="M795 889.500l1.500-1.500 1.500 1.500M795 903.500l1.500 1.500 1.500-1.500" stroke="#555"/>
</g>
<rect x="756" y="891" width="16.500" height="12.500" rx="2.500" fill="#1a70c0"/>
<text x="758" y="900.700" font-family="Liberation Sans,sans-serif" font-weight="bold" font-size="9.500" fill="#fff" letter-spacing="-0.200">CC</text>
</svg>
<div id="win"></div>
</body></html>
